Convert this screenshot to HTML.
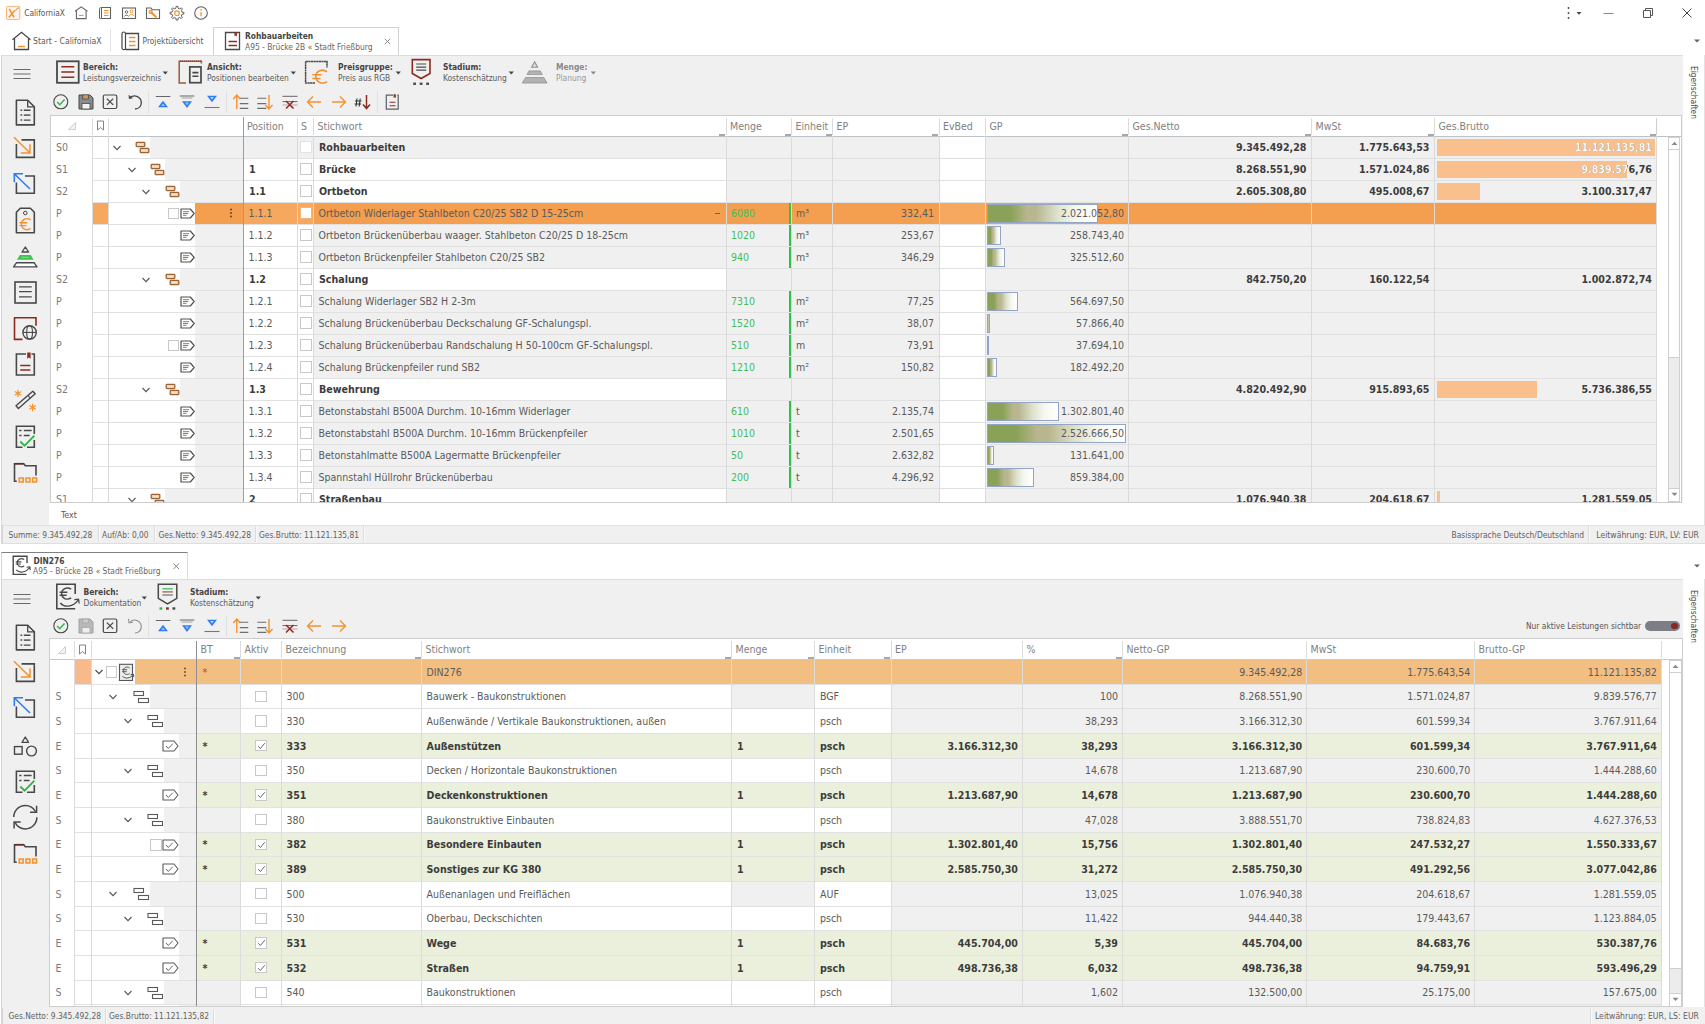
<!DOCTYPE html><html lang="de"><head><meta charset="utf-8"><title>CaliforniaX</title><style>
*{box-sizing:border-box}
html,body{margin:0;padding:0}
body{width:1705px;height:1024px;overflow:hidden;background:#fff;position:relative;font-family:"DejaVu Sans Condensed","Liberation Sans",sans-serif;font-size:8.35px;color:#555}
.a{position:absolute}
.t{position:absolute;white-space:nowrap;line-height:1}
.sm{font-size:8.35px;color:#5a5a5a}
.b{font-weight:bold}
.tb{font-weight:bold;font-size:8.4px;color:#444}
.pn{position:absolute;background:#f0f0f0}
.tbl{position:absolute;background:#fff;overflow:hidden;border:1px solid #cdcdcd}
.c{position:absolute;overflow:hidden;white-space:nowrap;font-size:10.5px;color:#5a5a5a}
.c span{position:absolute;top:50%;transform:translateY(-50%);line-height:1;margin-top:-0.4px}

.h{position:absolute;white-space:nowrap;font-size:10.5px;color:#818181;line-height:1}
.sb{font-weight:bold;font-size:10.6px;color:#3c3c3c}
.vl{position:absolute;width:1px;background:#dcdcdc}
.hl{position:absolute;height:1px;background:#e1e1e1}
.cb{position:absolute;width:11.5px;height:11.5px;border:1px solid #c8c8c8;background:#fff}
.g{color:#45be58}
</style></head><body>
<svg class="a" style="left:5px;top:5px" width="16" height="16" viewBox="0 0 16 16" fill="none"><rect x="1.500" y="1.300" width="13.300" height="13.300" rx="1" fill="#f8f5f1" stroke="#f4b47c" stroke-width="1"/><path d="M4.200 3.800l4.800 8.500M3.700 12.600L9.500 6" stroke="#f3922e" stroke-width="1.500"/><path d="M9.500 6L13.800 2.400" stroke="#f3922e" stroke-width="1.200" stroke-dasharray="1.300 0.700"/><path d="M10.500 5.200L13.800 2.400" stroke="#553" stroke-width="0.600" stroke-dasharray="0.800 1.200"/></svg>
<div class="t sm" style="left:24.2px;top:12.9px;transform:translateY(-50%);font-size:8.35px;color:#555">CaliforniaX</div>
<svg class="a" style="left:73px;top:5px" width="16" height="16" viewBox="0 0 16 16" fill="none"><path d="M2 6.300L8.200 1.900l6.300 4.400" stroke="#666" stroke-width="1.100"/><path d="M3.400 5.700V13.600h9.700V5.700" stroke="#666" stroke-width="1.100"/><path d="M5.800 10.400h4.800" stroke="#f3922e" stroke-width="1.100"/></svg>
<svg class="a" style="left:97px;top:5px" width="16" height="16" viewBox="0 0 16 16" fill="none"><path d="M4.5 2.5h9v11h-9" stroke="#606060" stroke-width="1.1"/><path d="M4.5 2.5c-1.6 0-2 .6-2 1.6V13c0 .8.8.9 2 .5z" stroke="#606060" stroke-width="1"/><path d="M7 5.5h4.5M7 8h4.5M7 10.5h4.5" stroke="#f3922e" stroke-width="1"/></svg>
<svg class="a" style="left:121px;top:5px" width="16" height="16" viewBox="0 0 16 16" fill="none"><rect x="1.5" y="3" width="13" height="10.5" stroke="#606060" stroke-width="1.1"/><circle cx="5.5" cy="7" r="1.3" stroke="#606060" stroke-width="0.9"/><path d="M3.3 11.5c.3-1.8 4-1.8 4.4 0" stroke="#606060" stroke-width="0.9"/><circle cx="10.5" cy="6.3" r="1.4" stroke="#f3922e" stroke-width="1"/><path d="M8.3 11c.3-2.2 4.2-2.2 4.5 0" stroke="#f3922e" stroke-width="1"/></svg>
<svg class="a" style="left:145px;top:5px" width="16" height="16" viewBox="0 0 16 16" fill="none"><path d="M1.500 13.500V3h4.500l1.300 1.800h7.200v8.700z" stroke="#606060" stroke-width="1.100"/><path d="M6.300 7.400l4.600 4.300" stroke="#f3922e" stroke-width="2" stroke-linecap="round"/><circle cx="5.600" cy="6.900" r="1.500" stroke="#f3922e" stroke-width="1.200"/></svg>
<svg class="a" style="left:169px;top:5px" width="16" height="16" viewBox="0 0 16 16" fill="none"><path d="M6.93 3.21 L7.14 1.35 L8.86 1.35 L9.07 3.21 L10.77 3.92 L12.23 2.75 L13.45 3.97 L12.28 5.43 L12.99 7.13 L14.85 7.34 L14.85 9.06 L12.99 9.27 L12.28 10.97 L13.45 12.43 L12.23 13.65 L10.77 12.48 L9.07 13.19 L8.86 15.05 L7.14 15.05 L6.93 13.19 L5.23 12.48 L3.77 13.65 L2.55 12.43 L3.72 10.97 L3.01 9.27 L1.15 9.06 L1.15 7.34 L3.01 7.13 L3.72 5.43 L2.55 3.97 L3.77 2.75 L5.23 3.92Z" stroke="#606060" stroke-width="1" stroke-linejoin="round"/><circle cx="8" cy="8.200" r="2.300" stroke="#f3922e" stroke-width="1.200"/></svg>
<svg class="a" style="left:193px;top:5px" width="16" height="16" viewBox="0 0 16 16" fill="none"><circle cx="8" cy="8" r="6.3" stroke="#606060" stroke-width="1.1"/><path d="M8 7v4.300" stroke="#f3922e" stroke-width="1.300"/><circle cx="8" cy="4.900" r="0.800" fill="#f3922e"/></svg>
<svg class="a" style="left:1560px;top:4px" width="30" height="18" viewBox="0 0 30 18" fill="none"><circle cx="8.500" cy="4" r="0.900" fill="#444"/><circle cx="8.500" cy="9" r="0.900" fill="#444"/><circle cx="8.500" cy="14" r="0.900" fill="#444"/><path d="M16.500 8h5l-2.500 2.800z" fill="#444"/></svg>
<svg class="a" style="left:1602px;top:4px" width="14" height="18" viewBox="0 0 14 18" fill="none"><path d="M1.5 9.5h10" stroke="#888" stroke-width="1"/></svg>
<svg class="a" style="left:1641px;top:5px" width="14" height="16" viewBox="0 0 14 16" fill="none"><path d="M2.500 5.500h7v7h-7z" stroke="#555" stroke-width="1"/><path d="M4.500 5.500v-2h7v7h-2" stroke="#555" stroke-width="1"/></svg>
<svg class="a" style="left:1680px;top:5px" width="14" height="16" viewBox="0 0 14 16" fill="none"><path d="M2.5 3.5l9 9M11.5 3.5l-9 9" stroke="#444" stroke-width="1"/></svg>
<svg class="a" style="left:11px;top:30px" width="21" height="21" viewBox="0 0 21 21" fill="none"><path d="M1.500 9.800L10.500 2.300l9 7.500" stroke="#484848" stroke-width="1.300"/><path d="M3.500 8.500V19.500h14V8.500" stroke="#484848" stroke-width="1.300"/><path d="M7 16.500h7" stroke="#f3922e" stroke-width="1.400"/></svg>
<div class="t sm" style="left:33px;top:40.9px;transform:translateY(-50%);font-size:8.6px">Start - CaliforniaX</div>
<div class="a" style="left:110px;top:29px;width:1px;height:23px;background:#e4e4e4;"></div>
<svg class="a" style="left:120px;top:30px" width="21" height="21" viewBox="0 0 21 21" fill="none"><path d="M5.500 3.500h13v16h-13" stroke="#484848" stroke-width="1.300"/><path d="M5.500 3.500c-0-2-3.500-2-3.500 0V18c0 1.800 1.500 1.800 3.500 1.500z" stroke="#484848" stroke-width="1.200"/><path d="M9 7.500h6.500M9 11.500h6.500M9 15.500h6.500" stroke="#f3922e" stroke-width="1.400"/></svg>
<div class="t sm" style="left:142.5px;top:40.9px;transform:translateY(-50%);font-size:8.35px">Projektübersicht</div>
<div class="a" style="left:213px;top:27px;width:186px;height:28px;background:#fff;border:1px solid #d2d2d2;border-bottom:none"></div>
<svg class="a" style="left:224px;top:31px" width="18" height="20" viewBox="0 0 18 20" fill="none"><path d="M1.500 1.500h14v17h-14z" stroke="#484848" stroke-width="1.300"/><path d="M10.500 1v4.500l1.200-1 1.200 1V1z" fill="#8d2b1f"/><path d="M4.500 10.500h8.500M4.500 14.500h8.500" stroke="#8d2b1f" stroke-width="1.300"/></svg>
<div class="t tb" style="left:245px;top:36px;transform:translateY(-50%);">Rohbauarbeiten</div>
<div class="t sm" style="left:245px;top:46.5px;transform:translateY(-50%);font-size:8.35px;color:#666">A95 - Brücke 2B « Stadt Frießburg</div>
<svg class="a" style="left:383px;top:37px" width="9" height="9" viewBox="0 0 9 9" fill="none"><path d="M1.800 1.800l5.400 5.400M7.200 1.800l-5.400 5.400" stroke="#808080" stroke-width="0.900"/></svg>
<svg class="a" style="left:1693px;top:38px" width="8" height="6" viewBox="0 0 8 6" fill="none"><path d="M1 1.5h6l-3 3z" fill="#666"/></svg>
<div class="pn" style="left:1px;top:54.5px;width:1704px;height:489px;border-left:1px solid #d6d6d6;border-top:1px solid #dcdcdc"></div>
<div class="a" style="left:1683px;top:55px;width:22px;height:470px;background:#fff;"></div>
<div class="t sm" style="left:1694px;top:66px;font-size:8.3px;color:#444;transform-origin:0 0;transform:rotate(90deg) translateY(-50%)">Eigenschaften</div>
<div class="a" style="left:1704px;top:55px;width:1px;height:470px;background:#e2e2e2;"></div>
<svg class="a" style="left:12px;top:68px" width="20" height="12" viewBox="0 0 20 12" fill="none"><path d="M1.5 1.5h17M1.5 6h17M1.5 10.5h17" stroke="#6a6a6a" stroke-width="1"/></svg>
<svg class="a" style="left:54px;top:58px" width="28" height="28" viewBox="54 58 28 28" fill="none"><rect x="57" y="61.300" width="21.700" height="21.500" stroke="#484848" stroke-width="1.800"/><path d="M61.300 66.800h13M61.300 72h13M61.300 77.200h13" stroke="#8d2b1f" stroke-width="1.500"/></svg>
<div class="t tb" style="left:83px;top:66.5px;transform:translateY(-50%);">Bereich:</div>
<div class="t sm" style="left:83px;top:77.5px;transform:translateY(-50%);font-size:8.35px">Leistungsverzeichnis</div>
<svg class="a" style="left:161.5px;top:70.5px" width="7" height="5" viewBox="0 0 7 5" fill="none"><path d="M0.700 0.600h5.200l-2.600 2.900z" fill="#444"/></svg>
<svg class="a" style="left:176px;top:58px" width="28" height="28" viewBox="176 58 28 28" fill="none"><path d="M186 83H179.200V61.300H201.400V63.500" stroke="#9c5b3a" stroke-width="1.500"/><path d="M180 61.100H201" stroke="#8d2b1f" stroke-width="1" stroke-dasharray="1 1"/><rect x="189.800" y="66.900" width="11.200" height="15.800" stroke="#484848" stroke-width="1.700"/><path d="M192.400 72.600h6M192.400 76.300h6" stroke="#484848" stroke-width="1.600"/></svg>
<div class="t tb" style="left:207px;top:66.5px;transform:translateY(-50%);">Ansicht:</div>
<div class="t sm" style="left:207px;top:77.5px;transform:translateY(-50%);font-size:8.35px">Positionen bearbeiten</div>
<svg class="a" style="left:289.5px;top:70.5px" width="7" height="5" viewBox="0 0 7 5" fill="none"><path d="M0.700 0.600h5.200l-2.600 2.900z" fill="#444"/></svg>
<svg class="a" style="left:302px;top:58px" width="28" height="28" viewBox="302 58 28 28" fill="none"><path d="M315 83H305.600V61.400H327V67.600" stroke="#484848" stroke-width="1.500" stroke-dasharray="2.200 0.400"/><path d="M327 71.800c-4.400-3.600-11.200-.900-11.200 4.800 0 5.800 6.700 8.500 11.200 5M312.300 74.700h9.300M312.300 78.500h8.300" stroke="#f3922e" stroke-width="1.600"/></svg>
<div class="t tb" style="left:338px;top:66.5px;transform:translateY(-50%);">Preisgruppe:</div>
<div class="t sm" style="left:338px;top:77.5px;transform:translateY(-50%);font-size:8.35px">Preis aus RGB</div>
<svg class="a" style="left:395px;top:70.5px" width="7" height="5" viewBox="0 0 7 5" fill="none"><path d="M0.700 0.600h5.200l-2.600 2.900z" fill="#444"/></svg>
<svg class="a" style="left:409px;top:56px" width="24" height="31" viewBox="409 56 24 31" fill="none"><path d="M412.300 59.600H430V73.500L421.100 78.500 412.300 73.500z" stroke="#8d2b1f" stroke-width="1.600"/><path d="M416.200 64h10M416.200 67.100h10M416.200 70.200h10" stroke="#484848" stroke-width="1.200"/><rect x="413.200" y="82.600" width="2.800" height="2.300" fill="#484848"/><rect x="419.700" y="82.600" width="2.800" height="2.300" fill="#484848"/><rect x="426.200" y="82.600" width="2.800" height="2.300" fill="#484848"/></svg>
<div class="t tb" style="left:443px;top:66.5px;transform:translateY(-50%);">Stadium:</div>
<div class="t sm" style="left:443px;top:77.5px;transform:translateY(-50%);font-size:8.35px">Kostenschätzung</div>
<svg class="a" style="left:507.5px;top:70.5px" width="7" height="5" viewBox="0 0 7 5" fill="none"><path d="M0.700 0.600h5.200l-2.600 2.900z" fill="#444"/></svg>
<svg class="a" style="left:520px;top:58px" width="30" height="28" viewBox="520 58 30 28" fill="none"><path d="M534.600 61.800L537.600 67.300H531.600z" stroke="#909090" stroke-width="1.100" fill="#dcdcdc"/><path d="M529 70.900H540.300L542.300 74.600H527z" fill="#b2b2b2" stroke="#909090" stroke-width="0.800"/><path d="M525.500 77.500H543.800L547 83H522.300z" fill="#b2b2b2" stroke="#909090" stroke-width="0.800"/></svg>
<div class="t tb" style="left:556px;top:66.5px;transform:translateY(-50%);color:#8a8a8a">Menge:</div>
<div class="t sm" style="left:556px;top:77.5px;transform:translateY(-50%);font-size:8.35px;color:#999">Planung</div>
<svg class="a" style="left:589.5px;top:70.5px" width="7" height="5" viewBox="0 0 7 5" fill="none"><path d="M0.700 0.600h5.200l-2.600 2.900z" fill="#888"/></svg>
<svg class="a" style="left:52px;top:92.7px" width="18" height="18" viewBox="0 0 18 18" fill="none"><circle cx="8.800" cy="8.800" r="7" stroke="#484848" stroke-width="1.100"/><path d="M5.200 9l2.600 2.700 4.700-5.100" stroke="#36b44b" stroke-width="1.500"/></svg>
<svg class="a" style="left:76.5px;top:92.7px" width="18" height="18" viewBox="0 0 18 18" fill="none"><path d="M2 2h11l3 3v11H2z" fill="#8a8a8a" stroke="#484848" stroke-width="1"/><rect x="5" y="10.500" width="8" height="5.500" fill="#f2f2f2" stroke="#484848" stroke-width="0.800"/><rect x="5.500" y="2" width="6" height="4" fill="#9a9a9a" stroke="#484848" stroke-width="0.700"/><rect x="7.500" y="2.300" width="2.800" height="2.800" fill="#f3922e"/></svg>
<svg class="a" style="left:101px;top:92.7px" width="18" height="18" viewBox="0 0 18 18" fill="none"><rect x="2.300" y="2" width="13.500" height="13.500" rx="1.500" stroke="#484848" stroke-width="1.200"/><path d="M5.900 5.600l6.300 6.300M12.200 5.600l-6.300 6.300" stroke="#484848" stroke-width="1.300"/></svg>
<svg class="a" style="left:125.5px;top:92.7px" width="18" height="18" viewBox="0 0 18 18" fill="none"><path d="M4 4.800c4.500-4 11.500-.800 11.300 5.200-.200 3.600-3 6-6.300 6" stroke="#484848" stroke-width="1.300"/><path d="M2.600 1.800l.300 4.200 4.100-.800z" fill="#484848"/></svg>
<div class="a" style="left:148px;top:90.7px;width:1px;height:22px;background:#e0e0e0;"></div>
<svg class="a" style="left:154px;top:92.7px" width="18" height="18" viewBox="0 0 18 18" fill="none"><path d="M1.800 3.500h14.500" stroke="#666" stroke-width="1"/><path d="M9 7.800l5 6.400H4z" fill="#2f7df6"/><path d="M9 10.600l1.900 2.400H7.100z" fill="#9cc2ff"/></svg>
<svg class="a" style="left:178px;top:92.7px" width="18" height="18" viewBox="0 0 18 18" fill="none"><path d="M1.800 3h14.500" stroke="#666" stroke-width="1"/><path d="M3.500 5h11" stroke="#9a9a9a" stroke-width="0.900"/><path d="M9 15l5-6.800H4z" fill="#2f7df6"/><path d="M9 12.200l1.900-2.600H7.100z" fill="#9cc2ff"/></svg>
<svg class="a" style="left:203px;top:92.7px" width="18" height="18" viewBox="0 0 18 18" fill="none"><path d="M9 9.300l5-6.500H4z" fill="#2f7df6"/><path d="M9 6.600l1.900-2.500H7.100z" fill="#b9d3ff"/><path d="M1.500 14.500h15" stroke="#777" stroke-width="1.100"/></svg>
<div class="a" style="left:226px;top:90.7px;width:1px;height:22px;background:#e0e0e0;"></div>
<svg class="a" style="left:231.5px;top:92.7px" width="18" height="18" viewBox="0 0 18 18" fill="none"><path d="M4.800 16V2M1.300 6l3.500-4 3.500 4" stroke="#f3922e" stroke-width="1.400"/><path d="M7.800 5.200h8.500M7.800 10.600h8.500M7.800 15.400h8.500" stroke="#6e6e6e" stroke-width="1.100"/></svg>
<svg class="a" style="left:256px;top:92.7px" width="18" height="18" viewBox="0 0 18 18" fill="none"><path d="M1.300 5.200h9M1.300 10.600h9M1.300 15.400h9" stroke="#6e6e6e" stroke-width="1.100"/><path d="M13 2v14M9.500 12l3.500 4 3.500-4" stroke="#f3922e" stroke-width="1.400"/></svg>
<svg class="a" style="left:280.5px;top:92.7px" width="18" height="18" viewBox="0 0 18 18" fill="none"><path d="M1.500 3.300h15M1.500 8.600h15" stroke="#666" stroke-width="1"/><path d="M1.500 12h15" stroke="#999" stroke-width="0.800"/><path d="M5 8l7.500 7.500M12.500 8l-7.500 7.500" stroke="#8d2b1f" stroke-width="1.500"/></svg>
<svg class="a" style="left:305px;top:92.7px" width="18" height="18" viewBox="0 0 18 18" fill="none"><path d="M16 9H2.500M8 3.500L2.500 9 8 14.500" stroke="#f3922e" stroke-width="1.400"/></svg>
<svg class="a" style="left:330px;top:92.7px" width="18" height="18" viewBox="0 0 18 18" fill="none"><path d="M2 9h13.500M10 3.500L15.500 9 10 14.500" stroke="#f3922e" stroke-width="1.400"/></svg>
<svg class="a" style="left:354px;top:92.7px" width="18" height="18" viewBox="0 0 18 18" fill="none"><path d="M3 5.500l-1 8M6.200 5.500l-1 8M1 8h6.500M.600 11h6.500" stroke="#333" stroke-width="1.100"/><path d="M12.500 2v13.500M9 11.500l3.500 4 3.500-4" stroke="#8d2b1f" stroke-width="1.500"/></svg>
<div class="a" style="left:377px;top:90.7px;width:1px;height:22px;background:#e0e0e0;"></div>
<svg class="a" style="left:383px;top:92.7px" width="18" height="18" viewBox="0 0 18 18" fill="none"><path d="M10 2.200H3.300v14h11.900v-14h-1" stroke="#5a5f6a" stroke-width="1.200"/><path d="M10.600 1.300h2.200v3.800l-1.100-.9-1.100.9z" fill="#8d2b1f"/><path d="M6.500 9.300h6M6.500 12.800h6" stroke="#8d2b1f" stroke-width="1.100"/></svg>
<svg class="a" style="left:12px;top:96px" width="28" height="33" viewBox="12 96 28 33" fill="none"><path d="M16.4 100.200H27.700L34.300 106.800V124.900H16.400z" stroke="#484848" stroke-width="1.6" stroke-linejoin="round"/><path d="M27.700 100.200V106.800H34.300" stroke="#484848" stroke-width="1.300"/><path d="M20.500 110.200h1.700M20.500 115.100h1.700M20.500 120.100h1.700" stroke="#484848" stroke-width="1.500"/><path d="M23.800 110.200h6.700M23.800 120.100h6.700" stroke="#484848" stroke-width="1.400"/><path d="M23.800 115.100h6.700" stroke="#484848" stroke-width="1.400"/></svg>
<svg class="a" style="left:10px;top:134px" width="30" height="28" viewBox="10 134 30 28" fill="none"><path d="M16.400 144V157.400H34.300V139.900H21.500" stroke="#484848" stroke-width="1.6"/><path d="M14 137.200L29.800 152.800M30 144.200V153H20.800" stroke="#f3922e" stroke-width="1.500"/></svg>
<svg class="a" style="left:10px;top:170px" width="30" height="28" viewBox="10 170 30 28" fill="none"><path d="M16.400 182.500V193.300H34.300V176H25" stroke="#484848" stroke-width="1.6"/><path d="M30 189L14.500 174M14.300 182.300V173.800H23" stroke="#2f7df6" stroke-width="1.600"/></svg>
<svg class="a" style="left:10px;top:204px" width="30" height="33" viewBox="10 204 30 33" fill="none"><path d="M16.400 232.800V212.300L20.300 208.300H30.400L34.300 212.300V232.800z" stroke="#484848" stroke-width="1.6" stroke-linejoin="round"/><circle cx="25.300" cy="213" r="1.800" stroke="#484848" stroke-width="1"/><path d="M30.800 219.800c-4.300-2.800-9.300-.2-9.300 4.400s5 7.100 9.300 4.300M19.400 222.800h7.800M19.400 225.600h7" stroke="#f3922e" stroke-width="1.400"/></svg>
<svg class="a" style="left:10px;top:242px" width="30" height="28" viewBox="10 242 30 28" fill="none"><path d="M25.300 247L28.600 252H22z" stroke="#484848" stroke-width="1.300" stroke-linejoin="round"/><path d="M19.800 254.900H30.800L33.600 259.700H17z" fill="#3fc450"/><path d="M21.500 257.300h7.600" stroke="#8fe09a" stroke-width="0.900"/><path d="M16.400 262.800H34.200L37 266.900H13.600z" fill="#fff" stroke="#484848" stroke-width="1.400" stroke-linejoin="round"/></svg>
<svg class="a" style="left:10px;top:278px" width="30" height="29" viewBox="10 278 30 29" fill="none"><rect x="15" y="282" width="21" height="21" stroke="#484848" stroke-width="1.6"/><path d="M19 286.800h12.700M19 291.600h12.700M19 296.800h12.700" stroke="#484848" stroke-width="1.300"/></svg>
<svg class="a" style="left:10px;top:314px" width="30" height="30" viewBox="10 314 30 30" fill="none"><path d="M22.500 339.400H14.500V317.800H36V325.800" stroke="#8d2b1f" stroke-width="1.6"/><circle cx="29.600" cy="332.400" r="6.700" stroke="#484848" stroke-width="1.400"/><ellipse cx="29.600" cy="332.400" rx="2.900" ry="6.700" stroke="#484848" stroke-width="1.100"/><path d="M23 332.400h13.200" stroke="#484848" stroke-width="1.100"/></svg>
<svg class="a" style="left:10px;top:350px" width="30" height="29" viewBox="10 350 30 29" fill="none"><path d="M26 354H16.400V375H34.300V354H31.500" stroke="#484848" stroke-width="1.6"/><path d="M27.200 352.500h3.400v6.300l-1.700-1.300-1.700 1.300z" fill="#8d2b1f"/><path d="M20.200 365.500h10.200M20.200 370h10.200" stroke="#8d2b1f" stroke-width="1.400"/></svg>
<svg class="a" style="left:10px;top:387px" width="30" height="29" viewBox="10 387 30 29" fill="none"><path d="M16 405.800L32.800 391.200L35.200 393.800L18.400 408.500z" stroke="#484848" stroke-width="1.400" stroke-linejoin="round"/><path d="M28 395.500l2.300 2.600" stroke="#484848" stroke-width="1.100"/><path d="M18 389.800v7.400M14.800 391.600l6.400 3.700M21.200 391.600l-6.400 3.700" stroke="#f3922e" stroke-width="1.200"/><path d="M32.600 403.800v7.400M29.400 405.600l6.400 3.700M35.800 405.600l-6.400 3.700" stroke="#f3922e" stroke-width="1.200"/></svg>
<svg class="a" style="left:10px;top:422px" width="30" height="30" viewBox="10 422 30 30" fill="none"><path d="M22.500 447.300H16.400V426.200H34.300V434M34.300 440V447.300H27" stroke="#484848" stroke-width="1.6"/><path d="M19.200 430.600h2.300M19.200 435.600h2.300M23.800 430.600h7.800M23.800 435.600h5.800" stroke="#484848" stroke-width="1.500"/><path d="M20.300 441.500l4.300 4.100 9.800-10" stroke="#36b44b" stroke-width="1.900"/></svg>
<svg class="a" style="left:10px;top:459px" width="30" height="27" viewBox="10 459 30 27" fill="none"><path d="M16.800 481.300H14.500V463.700H23.800L25.300 465.800H36V475.500" stroke="#484848" stroke-width="1.6"/><path d="M14.500 463.700H23.800" stroke="#6b2a24" stroke-width="1.6"/><rect x="19.200" y="478" width="4" height="4" fill="#fde3c8" stroke="#f3922e" stroke-width="1.500"/><rect x="25.900" y="478" width="4" height="4" fill="#fde3c8" stroke="#f3922e" stroke-width="1.500"/><rect x="32.600" y="478" width="4" height="4" fill="#fde3c8" stroke="#f3922e" stroke-width="1.500"/></svg>
<div class="tbl" style="left:50px;top:115.3px;width:1632px;height:387.5px">
<div class="a" style="left:0;top:0;width:1640px;height:20.6px;background:#fff;border-bottom:1px solid #bcc2c5"></div>
<div class="h" style="left:196px;top:10.0px;transform:translateY(-50%)">Position</div>
<div class="h" style="left:250px;top:10.0px;transform:translateY(-50%)">S</div>
<div class="h" style="left:266.5px;top:10.0px;transform:translateY(-50%)">Stichwort</div>
<div class="h" style="left:679px;top:10.0px;transform:translateY(-50%)">Menge</div>
<div class="h" style="left:744.5px;top:10.0px;transform:translateY(-50%)">Einheit</div>
<div class="h" style="left:785.5px;top:10.0px;transform:translateY(-50%)">EP</div>
<div class="h" style="left:892px;top:10.0px;transform:translateY(-50%)">EvBed</div>
<div class="h" style="left:938.5px;top:10.0px;transform:translateY(-50%)">GP</div>
<div class="h" style="left:1081.5px;top:10.0px;transform:translateY(-50%)">Ges.Netto</div>
<div class="h" style="left:1264.5px;top:10.0px;transform:translateY(-50%)">MwSt</div>
<div class="h" style="left:1387.5px;top:10.0px;transform:translateY(-50%)">Ges.Brutto</div>
<div class="vl" style="left:40.5px;top:1.7px;height:17px;background:#dcdcdc"></div>
<div class="vl" style="left:57.0px;top:1.7px;height:17px;background:#dcdcdc"></div>
<div class="vl" style="left:245.5px;top:1.7px;height:17px;background:#dcdcdc"></div>
<div class="vl" style="left:262.0px;top:1.7px;height:17px;background:#dcdcdc"></div>
<div class="vl" style="left:674.5px;top:1.7px;height:17px;background:#dcdcdc"></div>
<div class="vl" style="left:740.0px;top:1.7px;height:17px;background:#dcdcdc"></div>
<div class="vl" style="left:781.0px;top:1.7px;height:17px;background:#dcdcdc"></div>
<div class="vl" style="left:887.5px;top:1.7px;height:17px;background:#dcdcdc"></div>
<div class="vl" style="left:934.0px;top:1.7px;height:17px;background:#dcdcdc"></div>
<div class="vl" style="left:1077.0px;top:1.7px;height:17px;background:#dcdcdc"></div>
<div class="vl" style="left:1260.0px;top:1.7px;height:17px;background:#dcdcdc"></div>
<div class="vl" style="left:1383.0px;top:1.7px;height:17px;background:#dcdcdc"></div>
<div class="vl" style="left:1605.0px;top:1.7px;height:17px;background:#cfcfcf"></div>
<div class="a" style="left:668px;top:17.7px;width:6px;height:2px;background:#a8a8a8"></div>
<div class="a" style="left:733.5px;top:17.7px;width:6px;height:2px;background:#a8a8a8"></div>
<div class="a" style="left:774.5px;top:17.7px;width:6px;height:2px;background:#a8a8a8"></div>
<div class="a" style="left:881px;top:17.7px;width:6px;height:2px;background:#a8a8a8"></div>
<div class="a" style="left:1070.5px;top:17.7px;width:6px;height:2px;background:#a8a8a8"></div>
<div class="a" style="left:1253.5px;top:17.7px;width:6px;height:2px;background:#a8a8a8"></div>
<div class="a" style="left:1376.5px;top:17.7px;width:6px;height:2px;background:#a8a8a8"></div>
<div class="a" style="left:1598.5px;top:17.7px;width:6px;height:2px;background:#a8a8a8"></div>
<svg class="a" style="left:15.5px;top:4.7px" width="10" height="10" viewBox="0 0 10 10" fill="none"><path d="M8.5 1.5v7h-7z" fill="#f3f3f3" stroke="#cfcfcf" stroke-width="1"/></svg>
<svg class="a" style="left:45px;top:4.2px" width="9" height="11" viewBox="0 0 9 11" fill="none"><path d="M1.5 1h6v9l-3-2.4-3 2.4z" stroke="#777" stroke-width="0.9"/></svg>
<div class="c " style="left:-1px;top:20.0px;width:42px;height:22.0px;background:#fff;color:#7a7a7a"><span style="left:6px">S0</span></div>
<div class="c" style="left:41px;top:20.0px;width:16.5px;height:22.0px;background:#fff;"></div>
<div class="c" style="left:57.5px;top:20.0px;width:41.5px;height:22.0px;background:#fff;"></div>
<div class="c" style="left:99px;top:20.0px;width:93px;height:22.0px;background:#f0f0f0;"></div>
<svg class="a" style="left:60.7px;top:27.8px" width="10" height="8" viewBox="0 0 10 8" fill="none"><path d="M1.5 2l3.5 3.6L8.5 2" stroke="#555" stroke-width="1.1"/></svg>
<svg class="a" style="left:84px;top:24.5px" width="15" height="13" viewBox="0 0 15 13" fill="none"><rect x="1.200" y="1.300" width="8.600" height="4.300" rx="0.800" fill="#ecd0b0" stroke="#9c6538" stroke-width="1.300"/><rect x="5.200" y="7.400" width="8.600" height="4.300" rx="0.800" fill="#ecd0b0" stroke="#9c6538" stroke-width="1.300"/><path d="M3.200 3.450h4.600M7.200 9.550h4.600" stroke="#f7e6d2" stroke-width="0.900"/></svg>
<div class="c" style="left:192px;top:20.0px;width:54px;height:22.0px;background:#f0f0f0;"></div>
<div class="c" style="left:246px;top:20.0px;width:16.5px;height:22.0px;background:#f0f0f0;"></div>
<div class="cb" style="left:249.3px;top:25.1px;border-color:#e3e3e3;"></div>
<div class="c sb" style="left:262.5px;top:20.0px;width:412.5px;height:22.0px;background:#f0f0f0;"><span style="left:5.5px">Rohbauarbeiten</span></div>
<div class="c" style="left:675px;top:20.0px;width:65.5px;height:22.0px;background:#f0f0f0;"></div>
<div class="c" style="left:740.5px;top:20.0px;width:41.0px;height:22.0px;background:#f0f0f0;"></div>
<div class="c" style="left:781.5px;top:20.0px;width:106.5px;height:22.0px;background:#f0f0f0;"></div>
<div class="c" style="left:888px;top:20.0px;width:46.5px;height:22.0px;background:#fff;"></div>
<div class="c" style="left:934.5px;top:20.0px;width:143.0px;height:22.0px;background:#f0f0f0;"></div>
<div class="c sb nb" style="left:1077.5px;top:20.0px;width:183.0px;height:22.0px;background:#f0f0f0;"><span style="right:5px">9.345.492,28</span></div>
<div class="c sb nb" style="left:1260.5px;top:20.0px;width:123.0px;height:22.0px;background:#f0f0f0;"><span style="right:5px">1.775.643,53</span></div>
<div class="c" style="left:1383.5px;top:20.0px;width:222.0px;height:22.0px;background:#f0f0f0;"></div>
<div class="a" style="left:1386px;top:22.5px;width:217.5px;height:17px;background:#f9bf8c"></div>
<div class="c sb nb" style="left:1383.5px;top:20.0px;width:222px;height:22.0px;background:transparent"><span style="right:4.5px">11.121.135,81</span></div>
<div class="c sb nb" style="left:1386px;top:20.0px;width:217.5px;height:22.0px;background:transparent;color:#fff"><span style="left:215.0px;transform:translate(-100%,-50%)">11.121.135,81</span></div>
<div class="c " style="left:-1px;top:42.0px;width:42px;height:22.0px;background:#fff;color:#7a7a7a"><span style="left:6px">S1</span></div>
<div class="c" style="left:41px;top:42.0px;width:16.5px;height:22.0px;background:#fff;"></div>
<div class="c" style="left:57.5px;top:42.0px;width:56.5px;height:22.0px;background:#fff;"></div>
<div class="c" style="left:114px;top:42.0px;width:78px;height:22.0px;background:#f0f0f0;"></div>
<svg class="a" style="left:75.7px;top:49.8px" width="10" height="8" viewBox="0 0 10 8" fill="none"><path d="M1.5 2l3.5 3.6L8.5 2" stroke="#555" stroke-width="1.1"/></svg>
<svg class="a" style="left:99px;top:46.5px" width="15" height="13" viewBox="0 0 15 13" fill="none"><rect x="1.200" y="1.300" width="8.600" height="4.300" rx="0.800" fill="#ecd0b0" stroke="#9c6538" stroke-width="1.300"/><rect x="5.200" y="7.400" width="8.600" height="4.300" rx="0.800" fill="#ecd0b0" stroke="#9c6538" stroke-width="1.300"/><path d="M3.200 3.450h4.600M7.200 9.550h4.600" stroke="#f7e6d2" stroke-width="0.900"/></svg>
<div class="c sb" style="left:192px;top:42.0px;width:54px;height:22.0px;background:#fff;"><span style="left:6px">1</span></div>
<div class="c" style="left:246px;top:42.0px;width:16.5px;height:22.0px;background:#fff;"></div>
<div class="cb" style="left:249.3px;top:47.1px;"></div>
<div class="c sb" style="left:262.5px;top:42.0px;width:412.5px;height:22.0px;background:#fff;"><span style="left:5.5px">Brücke</span></div>
<div class="c" style="left:675px;top:42.0px;width:65.5px;height:22.0px;background:#f0f0f0;"></div>
<div class="c" style="left:740.5px;top:42.0px;width:41.0px;height:22.0px;background:#f0f0f0;"></div>
<div class="c" style="left:781.5px;top:42.0px;width:106.5px;height:22.0px;background:#f0f0f0;"></div>
<div class="c" style="left:888px;top:42.0px;width:46.5px;height:22.0px;background:#fff;"></div>
<div class="c" style="left:934.5px;top:42.0px;width:143.0px;height:22.0px;background:#f0f0f0;"></div>
<div class="c sb nb" style="left:1077.5px;top:42.0px;width:183.0px;height:22.0px;background:#f0f0f0;"><span style="right:5px">8.268.551,90</span></div>
<div class="c sb nb" style="left:1260.5px;top:42.0px;width:123.0px;height:22.0px;background:#f0f0f0;"><span style="right:5px">1.571.024,86</span></div>
<div class="c" style="left:1383.5px;top:42.0px;width:222.0px;height:22.0px;background:#f0f0f0;"></div>
<div class="a" style="left:1386px;top:44.5px;width:189.6px;height:17px;background:#f9bf8c"></div>
<div class="c sb nb" style="left:1383.5px;top:42.0px;width:222px;height:22.0px;background:transparent"><span style="right:4.5px">9.839.576,76</span></div>
<div class="c sb nb" style="left:1386px;top:42.0px;width:189.6px;height:22.0px;background:transparent;color:#fff"><span style="left:215.0px;transform:translate(-100%,-50%)">9.839.576,76</span></div>
<div class="c " style="left:-1px;top:64.0px;width:42px;height:22.0px;background:#fff;color:#7a7a7a"><span style="left:6px">S2</span></div>
<div class="c" style="left:41px;top:64.0px;width:16.5px;height:22.0px;background:#fff;"></div>
<div class="c" style="left:57.5px;top:64.0px;width:71.0px;height:22.0px;background:#fff;"></div>
<div class="c" style="left:128.5px;top:64.0px;width:63.5px;height:22.0px;background:#f0f0f0;"></div>
<svg class="a" style="left:89.7px;top:71.8px" width="10" height="8" viewBox="0 0 10 8" fill="none"><path d="M1.5 2l3.5 3.6L8.5 2" stroke="#555" stroke-width="1.1"/></svg>
<svg class="a" style="left:113.5px;top:68.5px" width="15" height="13" viewBox="0 0 15 13" fill="none"><rect x="1.200" y="1.300" width="8.600" height="4.300" rx="0.800" fill="#ecd0b0" stroke="#9c6538" stroke-width="1.300"/><rect x="5.200" y="7.400" width="8.600" height="4.300" rx="0.800" fill="#ecd0b0" stroke="#9c6538" stroke-width="1.300"/><path d="M3.200 3.450h4.600M7.200 9.550h4.600" stroke="#f7e6d2" stroke-width="0.900"/></svg>
<div class="c sb" style="left:192px;top:64.0px;width:54px;height:22.0px;background:#fff;"><span style="left:6px">1.1</span></div>
<div class="c" style="left:246px;top:64.0px;width:16.5px;height:22.0px;background:#fff;"></div>
<div class="cb" style="left:249.3px;top:69.1px;"></div>
<div class="c sb" style="left:262.5px;top:64.0px;width:412.5px;height:22.0px;background:#fff;"><span style="left:5.5px">Ortbeton</span></div>
<div class="c" style="left:675px;top:64.0px;width:65.5px;height:22.0px;background:#f0f0f0;"></div>
<div class="c" style="left:740.5px;top:64.0px;width:41.0px;height:22.0px;background:#f0f0f0;"></div>
<div class="c" style="left:781.5px;top:64.0px;width:106.5px;height:22.0px;background:#f0f0f0;"></div>
<div class="c" style="left:888px;top:64.0px;width:46.5px;height:22.0px;background:#fff;"></div>
<div class="c" style="left:934.5px;top:64.0px;width:143.0px;height:22.0px;background:#f0f0f0;"></div>
<div class="c sb nb" style="left:1077.5px;top:64.0px;width:183.0px;height:22.0px;background:#f0f0f0;"><span style="right:5px">2.605.308,80</span></div>
<div class="c sb nb" style="left:1260.5px;top:64.0px;width:123.0px;height:22.0px;background:#f0f0f0;"><span style="right:5px">495.008,67</span></div>
<div class="c" style="left:1383.5px;top:64.0px;width:222.0px;height:22.0px;background:#f0f0f0;"></div>
<div class="a" style="left:1386px;top:66.5px;width:42.9px;height:17px;background:#f9bf8c"></div>
<div class="c sb nb" style="left:1383.5px;top:64.0px;width:222px;height:22.0px;background:transparent"><span style="right:4.5px">3.100.317,47</span></div>
<div class="c sb nb" style="left:1386px;top:64.0px;width:42.9px;height:22.0px;background:transparent;color:#fff"><span style="left:215.0px;transform:translate(-100%,-50%)">3.100.317,47</span></div>
<div class="c " style="left:-1px;top:86.0px;width:42px;height:22.0px;background:#fff;color:#7a7a7a"><span style="left:6px">P</span></div>
<div class="c" style="left:41px;top:86.0px;width:16.5px;height:22.0px;background:#f7a85f;"></div>
<div class="c" style="left:57.5px;top:86.0px;width:86.0px;height:22.0px;background:#fff;"></div>
<div class="c" style="left:143.5px;top:86.0px;width:48.5px;height:22.0px;background:#f49e4f;"></div>
<div class="cb" style="left:116.5px;top:91.5px"></div>
<svg class="a" style="left:128.5px;top:91.5px" width="15" height="11" viewBox="0 0 15 11" fill="none"><path d="M1 1h9.300l3.900 4.500-3.900 4.500H1z" fill="#fff" stroke="#505050" stroke-width="1.200" stroke-linejoin="round"/><path d="M3 3.700h6.200M3 5.500h5.200M3 7.300h3.600" stroke="#9c6538" stroke-width="0.900"/></svg>
<svg class="a" style="left:178px;top:92.0px" width="4" height="10" viewBox="0 0 4 10"><circle cx="2" cy="1.5" r="0.9" fill="#5a3a1a"/><circle cx="2" cy="5" r="0.9" fill="#5a3a1a"/><circle cx="2" cy="8.5" r="0.9" fill="#5a3a1a"/></svg>
<div class="c " style="left:192px;top:86.0px;width:54px;height:22.0px;background:#f7a85f;"><span style="left:5.5px">1.1.1</span></div>
<div class="c" style="left:246px;top:86.0px;width:16.5px;height:22.0px;background:#f7a85f;"></div>
<div class="cb" style="left:249.3px;top:91.1px;border-color:#f7b277;"></div>
<div class="c " style="left:262.5px;top:86.0px;width:412.5px;height:22.0px;background:#f49e4f;"><span style="left:5px">Ortbeton Widerlager Stahlbeton C20/25 SB2 D 15-25cm</span></div>
<div class="a" style="left:664px;top:97.0px;width:5px;height:1px;background:#8a5a2a"></div>
<div class="c g n" style="left:675px;top:86.0px;width:65.5px;height:22.0px;background:#f49e4f;"><span style="left:5px">6080</span></div>
<div class="c " style="left:740.5px;top:86.0px;width:41.0px;height:22.0px;background:#f49e4f;"><span style="left:4.6px">m³</span></div>
<div class="a" style="left:738.3px;top:86.0px;width:1.7px;height:22.0px;background:#2fc24e"></div>
<div class="c n" style="left:781.5px;top:86.0px;width:106.5px;height:22.0px;background:#f49e4f;"><span style="right:5px">332,41</span></div>
<div class="c" style="left:888px;top:86.0px;width:46.5px;height:22.0px;background:#f7a85f;"></div>
<div class="c" style="left:934.5px;top:86.0px;width:143.0px;height:22.0px;background:#f49e4f;"></div>
<div class="a" style="left:936.2px;top:87.7px;width:110.8px;height:18.6px;border:1px solid #93a5c6;background:linear-gradient(90deg,#8aa258 0%,#8aa258 21%,#b9b68f 36%,#b9b68f 44%,#dfe3cd 64%,#f6f7f0 80%,#fff 100%)"></div>
<div class="c n" style="left:934.5px;top:86.0px;width:143px;height:22.0px;background:transparent"><span style="right:4.5px">2.021.052,80</span></div>
<div class="c" style="left:1077.5px;top:86.0px;width:183.0px;height:22.0px;background:#f49e4f;"></div>
<div class="c" style="left:1260.5px;top:86.0px;width:123.0px;height:22.0px;background:#f49e4f;"></div>
<div class="c" style="left:1383.5px;top:86.0px;width:222.0px;height:22.0px;background:#f49e4f;"></div>
<div class="c " style="left:-1px;top:108.0px;width:42px;height:22.0px;background:#fff;color:#7a7a7a"><span style="left:6px">P</span></div>
<div class="c" style="left:41px;top:108.0px;width:16.5px;height:22.0px;background:#fff;"></div>
<div class="c" style="left:57.5px;top:108.0px;width:86.0px;height:22.0px;background:#fff;"></div>
<div class="c" style="left:143.5px;top:108.0px;width:48.5px;height:22.0px;background:#f0f0f0;"></div>
<svg class="a" style="left:128.5px;top:113.5px" width="15" height="11" viewBox="0 0 15 11" fill="none"><path d="M1 1h9.300l3.900 4.500-3.900 4.500H1z" fill="#fff" stroke="#505050" stroke-width="1.200" stroke-linejoin="round"/><path d="M3 3.700h6.200M3 5.500h5.200M3 7.300h3.600" stroke="#9c6538" stroke-width="0.900"/></svg>
<div class="c " style="left:192px;top:108.0px;width:54px;height:22.0px;background:#fff;"><span style="left:5.5px">1.1.2</span></div>
<div class="c" style="left:246px;top:108.0px;width:16.5px;height:22.0px;background:#fff;"></div>
<div class="cb" style="left:249.3px;top:113.1px;"></div>
<div class="c " style="left:262.5px;top:108.0px;width:412.5px;height:22.0px;background:#f0f0f0;"><span style="left:5px">Ortbeton Brückenüberbau waager. Stahlbeton C20/25 D 18-25cm</span></div>
<div class="c g n" style="left:675px;top:108.0px;width:65.5px;height:22.0px;background:#f0f0f0;"><span style="left:5px">1020</span></div>
<div class="c " style="left:740.5px;top:108.0px;width:41.0px;height:22.0px;background:#f0f0f0;"><span style="left:4.6px">m³</span></div>
<div class="a" style="left:738.3px;top:108.0px;width:1.7px;height:22.0px;background:#2fc24e"></div>
<div class="c n" style="left:781.5px;top:108.0px;width:106.5px;height:22.0px;background:#f0f0f0;"><span style="right:5px">253,67</span></div>
<div class="c" style="left:888px;top:108.0px;width:46.5px;height:22.0px;background:#fff;"></div>
<div class="c" style="left:934.5px;top:108.0px;width:143.0px;height:22.0px;background:#f0f0f0;"></div>
<div class="a" style="left:936.2px;top:109.7px;width:14.2px;height:18.6px;border:1px solid #93a5c6;background:linear-gradient(90deg,#8aa258 0%,#8aa258 21%,#b9b68f 36%,#b9b68f 44%,#dfe3cd 64%,#f6f7f0 80%,#fff 100%)"></div>
<div class="c n" style="left:934.5px;top:108.0px;width:143px;height:22.0px;background:transparent"><span style="right:4.5px">258.743,40</span></div>
<div class="c" style="left:1077.5px;top:108.0px;width:183.0px;height:22.0px;background:#f0f0f0;"></div>
<div class="c" style="left:1260.5px;top:108.0px;width:123.0px;height:22.0px;background:#f0f0f0;"></div>
<div class="c" style="left:1383.5px;top:108.0px;width:222.0px;height:22.0px;background:#f0f0f0;"></div>
<div class="c " style="left:-1px;top:130.0px;width:42px;height:22.0px;background:#fff;color:#7a7a7a"><span style="left:6px">P</span></div>
<div class="c" style="left:41px;top:130.0px;width:16.5px;height:22.0px;background:#fff;"></div>
<div class="c" style="left:57.5px;top:130.0px;width:86.0px;height:22.0px;background:#fff;"></div>
<div class="c" style="left:143.5px;top:130.0px;width:48.5px;height:22.0px;background:#f0f0f0;"></div>
<svg class="a" style="left:128.5px;top:135.5px" width="15" height="11" viewBox="0 0 15 11" fill="none"><path d="M1 1h9.300l3.900 4.500-3.900 4.500H1z" fill="#fff" stroke="#505050" stroke-width="1.200" stroke-linejoin="round"/><path d="M3 3.700h6.200M3 5.500h5.200M3 7.300h3.600" stroke="#9c6538" stroke-width="0.900"/></svg>
<div class="c " style="left:192px;top:130.0px;width:54px;height:22.0px;background:#fff;"><span style="left:5.5px">1.1.3</span></div>
<div class="c" style="left:246px;top:130.0px;width:16.5px;height:22.0px;background:#fff;"></div>
<div class="cb" style="left:249.3px;top:135.1px;"></div>
<div class="c " style="left:262.5px;top:130.0px;width:412.5px;height:22.0px;background:#f0f0f0;"><span style="left:5px">Ortbeton Brückenpfeiler Stahlbeton C20/25 SB2</span></div>
<div class="c g n" style="left:675px;top:130.0px;width:65.5px;height:22.0px;background:#f0f0f0;"><span style="left:5px">940</span></div>
<div class="c " style="left:740.5px;top:130.0px;width:41.0px;height:22.0px;background:#f0f0f0;"><span style="left:4.6px">m³</span></div>
<div class="a" style="left:738.3px;top:130.0px;width:1.7px;height:22.0px;background:#2fc24e"></div>
<div class="c n" style="left:781.5px;top:130.0px;width:106.5px;height:22.0px;background:#f0f0f0;"><span style="right:5px">346,29</span></div>
<div class="c" style="left:888px;top:130.0px;width:46.5px;height:22.0px;background:#fff;"></div>
<div class="c" style="left:934.5px;top:130.0px;width:143.0px;height:22.0px;background:#f0f0f0;"></div>
<div class="a" style="left:936.2px;top:131.7px;width:17.8px;height:18.6px;border:1px solid #93a5c6;background:linear-gradient(90deg,#8aa258 0%,#8aa258 21%,#b9b68f 36%,#b9b68f 44%,#dfe3cd 64%,#f6f7f0 80%,#fff 100%)"></div>
<div class="c n" style="left:934.5px;top:130.0px;width:143px;height:22.0px;background:transparent"><span style="right:4.5px">325.512,60</span></div>
<div class="c" style="left:1077.5px;top:130.0px;width:183.0px;height:22.0px;background:#f0f0f0;"></div>
<div class="c" style="left:1260.5px;top:130.0px;width:123.0px;height:22.0px;background:#f0f0f0;"></div>
<div class="c" style="left:1383.5px;top:130.0px;width:222.0px;height:22.0px;background:#f0f0f0;"></div>
<div class="c " style="left:-1px;top:152.0px;width:42px;height:22.0px;background:#fff;color:#7a7a7a"><span style="left:6px">S2</span></div>
<div class="c" style="left:41px;top:152.0px;width:16.5px;height:22.0px;background:#fff;"></div>
<div class="c" style="left:57.5px;top:152.0px;width:71.0px;height:22.0px;background:#fff;"></div>
<div class="c" style="left:128.5px;top:152.0px;width:63.5px;height:22.0px;background:#f0f0f0;"></div>
<svg class="a" style="left:89.7px;top:159.8px" width="10" height="8" viewBox="0 0 10 8" fill="none"><path d="M1.5 2l3.5 3.6L8.5 2" stroke="#555" stroke-width="1.1"/></svg>
<svg class="a" style="left:113.5px;top:156.5px" width="15" height="13" viewBox="0 0 15 13" fill="none"><rect x="1.200" y="1.300" width="8.600" height="4.300" rx="0.800" fill="#ecd0b0" stroke="#9c6538" stroke-width="1.300"/><rect x="5.200" y="7.400" width="8.600" height="4.300" rx="0.800" fill="#ecd0b0" stroke="#9c6538" stroke-width="1.300"/><path d="M3.200 3.450h4.600M7.200 9.550h4.600" stroke="#f7e6d2" stroke-width="0.900"/></svg>
<div class="c sb" style="left:192px;top:152.0px;width:54px;height:22.0px;background:#fff;"><span style="left:6px">1.2</span></div>
<div class="c" style="left:246px;top:152.0px;width:16.5px;height:22.0px;background:#fff;"></div>
<div class="cb" style="left:249.3px;top:157.1px;"></div>
<div class="c sb" style="left:262.5px;top:152.0px;width:412.5px;height:22.0px;background:#fff;"><span style="left:5.5px">Schalung</span></div>
<div class="c" style="left:675px;top:152.0px;width:65.5px;height:22.0px;background:#f0f0f0;"></div>
<div class="c" style="left:740.5px;top:152.0px;width:41.0px;height:22.0px;background:#f0f0f0;"></div>
<div class="c" style="left:781.5px;top:152.0px;width:106.5px;height:22.0px;background:#f0f0f0;"></div>
<div class="c" style="left:888px;top:152.0px;width:46.5px;height:22.0px;background:#fff;"></div>
<div class="c" style="left:934.5px;top:152.0px;width:143.0px;height:22.0px;background:#f0f0f0;"></div>
<div class="c sb nb" style="left:1077.5px;top:152.0px;width:183.0px;height:22.0px;background:#f0f0f0;"><span style="right:5px">842.750,20</span></div>
<div class="c sb nb" style="left:1260.5px;top:152.0px;width:123.0px;height:22.0px;background:#f0f0f0;"><span style="right:5px">160.122,54</span></div>
<div class="c" style="left:1383.5px;top:152.0px;width:222.0px;height:22.0px;background:#f0f0f0;"></div>
<div class="c sb nb" style="left:1383.5px;top:152.0px;width:222px;height:22.0px;background:transparent"><span style="right:4.5px">1.002.872,74</span></div>
<div class="c " style="left:-1px;top:174.0px;width:42px;height:22.0px;background:#fff;color:#7a7a7a"><span style="left:6px">P</span></div>
<div class="c" style="left:41px;top:174.0px;width:16.5px;height:22.0px;background:#fff;"></div>
<div class="c" style="left:57.5px;top:174.0px;width:86.0px;height:22.0px;background:#fff;"></div>
<div class="c" style="left:143.5px;top:174.0px;width:48.5px;height:22.0px;background:#f0f0f0;"></div>
<svg class="a" style="left:128.5px;top:179.5px" width="15" height="11" viewBox="0 0 15 11" fill="none"><path d="M1 1h9.300l3.900 4.500-3.900 4.500H1z" fill="#fff" stroke="#505050" stroke-width="1.200" stroke-linejoin="round"/><path d="M3 3.700h6.200M3 5.500h5.200M3 7.300h3.600" stroke="#9c6538" stroke-width="0.900"/></svg>
<div class="c " style="left:192px;top:174.0px;width:54px;height:22.0px;background:#fff;"><span style="left:5.5px">1.2.1</span></div>
<div class="c" style="left:246px;top:174.0px;width:16.5px;height:22.0px;background:#fff;"></div>
<div class="cb" style="left:249.3px;top:179.1px;"></div>
<div class="c " style="left:262.5px;top:174.0px;width:412.5px;height:22.0px;background:#f0f0f0;"><span style="left:5px">Schalung Widerlager SB2 H 2-3m</span></div>
<div class="c g n" style="left:675px;top:174.0px;width:65.5px;height:22.0px;background:#f0f0f0;"><span style="left:5px">7310</span></div>
<div class="c " style="left:740.5px;top:174.0px;width:41.0px;height:22.0px;background:#f0f0f0;"><span style="left:4.6px">m²</span></div>
<div class="a" style="left:738.3px;top:174.0px;width:1.7px;height:22.0px;background:#2fc24e"></div>
<div class="c n" style="left:781.5px;top:174.0px;width:106.5px;height:22.0px;background:#f0f0f0;"><span style="right:5px">77,25</span></div>
<div class="c" style="left:888px;top:174.0px;width:46.5px;height:22.0px;background:#fff;"></div>
<div class="c" style="left:934.5px;top:174.0px;width:143.0px;height:22.0px;background:#f0f0f0;"></div>
<div class="a" style="left:936.2px;top:175.7px;width:31.0px;height:18.6px;border:1px solid #93a5c6;background:linear-gradient(90deg,#8aa258 0%,#8aa258 21%,#b9b68f 36%,#b9b68f 44%,#dfe3cd 64%,#f6f7f0 80%,#fff 100%)"></div>
<div class="c n" style="left:934.5px;top:174.0px;width:143px;height:22.0px;background:transparent"><span style="right:4.5px">564.697,50</span></div>
<div class="c" style="left:1077.5px;top:174.0px;width:183.0px;height:22.0px;background:#f0f0f0;"></div>
<div class="c" style="left:1260.5px;top:174.0px;width:123.0px;height:22.0px;background:#f0f0f0;"></div>
<div class="c" style="left:1383.5px;top:174.0px;width:222.0px;height:22.0px;background:#f0f0f0;"></div>
<div class="c " style="left:-1px;top:196.0px;width:42px;height:22.0px;background:#fff;color:#7a7a7a"><span style="left:6px">P</span></div>
<div class="c" style="left:41px;top:196.0px;width:16.5px;height:22.0px;background:#fff;"></div>
<div class="c" style="left:57.5px;top:196.0px;width:86.0px;height:22.0px;background:#fff;"></div>
<div class="c" style="left:143.5px;top:196.0px;width:48.5px;height:22.0px;background:#f0f0f0;"></div>
<svg class="a" style="left:128.5px;top:201.5px" width="15" height="11" viewBox="0 0 15 11" fill="none"><path d="M1 1h9.300l3.900 4.500-3.900 4.500H1z" fill="#fff" stroke="#505050" stroke-width="1.200" stroke-linejoin="round"/><path d="M3 3.700h6.200M3 5.500h5.200M3 7.300h3.600" stroke="#9c6538" stroke-width="0.900"/></svg>
<div class="c " style="left:192px;top:196.0px;width:54px;height:22.0px;background:#fff;"><span style="left:5.5px">1.2.2</span></div>
<div class="c" style="left:246px;top:196.0px;width:16.5px;height:22.0px;background:#fff;"></div>
<div class="cb" style="left:249.3px;top:201.1px;"></div>
<div class="c " style="left:262.5px;top:196.0px;width:412.5px;height:22.0px;background:#f0f0f0;"><span style="left:5px">Schalung Brückenüberbau Deckschalung GF-Schalungspl.</span></div>
<div class="c g n" style="left:675px;top:196.0px;width:65.5px;height:22.0px;background:#f0f0f0;"><span style="left:5px">1520</span></div>
<div class="c " style="left:740.5px;top:196.0px;width:41.0px;height:22.0px;background:#f0f0f0;"><span style="left:4.6px">m²</span></div>
<div class="a" style="left:738.3px;top:196.0px;width:1.7px;height:22.0px;background:#2fc24e"></div>
<div class="c n" style="left:781.5px;top:196.0px;width:106.5px;height:22.0px;background:#f0f0f0;"><span style="right:5px">38,07</span></div>
<div class="c" style="left:888px;top:196.0px;width:46.5px;height:22.0px;background:#fff;"></div>
<div class="c" style="left:934.5px;top:196.0px;width:143.0px;height:22.0px;background:#f0f0f0;"></div>
<div class="a" style="left:936.2px;top:197.7px;width:3.2px;height:18.6px;border:1px solid #93a5c6;background:linear-gradient(90deg,#8aa258 0%,#8aa258 21%,#b9b68f 36%,#b9b68f 44%,#dfe3cd 64%,#f6f7f0 80%,#fff 100%)"></div>
<div class="c n" style="left:934.5px;top:196.0px;width:143px;height:22.0px;background:transparent"><span style="right:4.5px">57.866,40</span></div>
<div class="c" style="left:1077.5px;top:196.0px;width:183.0px;height:22.0px;background:#f0f0f0;"></div>
<div class="c" style="left:1260.5px;top:196.0px;width:123.0px;height:22.0px;background:#f0f0f0;"></div>
<div class="c" style="left:1383.5px;top:196.0px;width:222.0px;height:22.0px;background:#f0f0f0;"></div>
<div class="c " style="left:-1px;top:218.0px;width:42px;height:22.0px;background:#fff;color:#7a7a7a"><span style="left:6px">P</span></div>
<div class="c" style="left:41px;top:218.0px;width:16.5px;height:22.0px;background:#fff;"></div>
<div class="c" style="left:57.5px;top:218.0px;width:86.0px;height:22.0px;background:#fff;"></div>
<div class="c" style="left:143.5px;top:218.0px;width:48.5px;height:22.0px;background:#f0f0f0;"></div>
<div class="cb" style="left:116.5px;top:223.5px"></div>
<svg class="a" style="left:128.5px;top:223.5px" width="15" height="11" viewBox="0 0 15 11" fill="none"><path d="M1 1h9.300l3.900 4.500-3.900 4.500H1z" fill="#fff" stroke="#505050" stroke-width="1.200" stroke-linejoin="round"/><path d="M3 3.700h6.200M3 5.500h5.200M3 7.300h3.600" stroke="#9c6538" stroke-width="0.900"/></svg>
<div class="c " style="left:192px;top:218.0px;width:54px;height:22.0px;background:#fff;"><span style="left:5.5px">1.2.3</span></div>
<div class="c" style="left:246px;top:218.0px;width:16.5px;height:22.0px;background:#fff;"></div>
<div class="cb" style="left:249.3px;top:223.1px;"></div>
<div class="c " style="left:262.5px;top:218.0px;width:412.5px;height:22.0px;background:#f0f0f0;"><span style="left:5px">Schalung Brückenüberbau Randschalung H 50-100cm GF-Schalungspl.</span></div>
<div class="c g n" style="left:675px;top:218.0px;width:65.5px;height:22.0px;background:#f0f0f0;"><span style="left:5px">510</span></div>
<div class="c " style="left:740.5px;top:218.0px;width:41.0px;height:22.0px;background:#f0f0f0;"><span style="left:4.6px">m</span></div>
<div class="a" style="left:738.3px;top:218.0px;width:1.7px;height:22.0px;background:#2fc24e"></div>
<div class="c n" style="left:781.5px;top:218.0px;width:106.5px;height:22.0px;background:#f0f0f0;"><span style="right:5px">73,91</span></div>
<div class="c" style="left:888px;top:218.0px;width:46.5px;height:22.0px;background:#fff;"></div>
<div class="c" style="left:934.5px;top:218.0px;width:143.0px;height:22.0px;background:#f0f0f0;"></div>
<div class="a" style="left:936.2px;top:219.7px;width:2.1px;height:18.6px;border:1px solid #93a5c6;background:linear-gradient(90deg,#8aa258 0%,#8aa258 21%,#b9b68f 36%,#b9b68f 44%,#dfe3cd 64%,#f6f7f0 80%,#fff 100%)"></div>
<div class="c n" style="left:934.5px;top:218.0px;width:143px;height:22.0px;background:transparent"><span style="right:4.5px">37.694,10</span></div>
<div class="c" style="left:1077.5px;top:218.0px;width:183.0px;height:22.0px;background:#f0f0f0;"></div>
<div class="c" style="left:1260.5px;top:218.0px;width:123.0px;height:22.0px;background:#f0f0f0;"></div>
<div class="c" style="left:1383.5px;top:218.0px;width:222.0px;height:22.0px;background:#f0f0f0;"></div>
<div class="c " style="left:-1px;top:240.0px;width:42px;height:22.0px;background:#fff;color:#7a7a7a"><span style="left:6px">P</span></div>
<div class="c" style="left:41px;top:240.0px;width:16.5px;height:22.0px;background:#fff;"></div>
<div class="c" style="left:57.5px;top:240.0px;width:86.0px;height:22.0px;background:#fff;"></div>
<div class="c" style="left:143.5px;top:240.0px;width:48.5px;height:22.0px;background:#f0f0f0;"></div>
<svg class="a" style="left:128.5px;top:245.5px" width="15" height="11" viewBox="0 0 15 11" fill="none"><path d="M1 1h9.300l3.900 4.500-3.900 4.500H1z" fill="#fff" stroke="#505050" stroke-width="1.200" stroke-linejoin="round"/><path d="M3 3.700h6.200M3 5.500h5.200M3 7.300h3.600" stroke="#9c6538" stroke-width="0.900"/></svg>
<div class="c " style="left:192px;top:240.0px;width:54px;height:22.0px;background:#fff;"><span style="left:5.5px">1.2.4</span></div>
<div class="c" style="left:246px;top:240.0px;width:16.5px;height:22.0px;background:#fff;"></div>
<div class="cb" style="left:249.3px;top:245.1px;"></div>
<div class="c " style="left:262.5px;top:240.0px;width:412.5px;height:22.0px;background:#f0f0f0;"><span style="left:5px">Schalung Brückenpfeiler rund SB2</span></div>
<div class="c g n" style="left:675px;top:240.0px;width:65.5px;height:22.0px;background:#f0f0f0;"><span style="left:5px">1210</span></div>
<div class="c " style="left:740.5px;top:240.0px;width:41.0px;height:22.0px;background:#f0f0f0;"><span style="left:4.6px">m²</span></div>
<div class="a" style="left:738.3px;top:240.0px;width:1.7px;height:22.0px;background:#2fc24e"></div>
<div class="c n" style="left:781.5px;top:240.0px;width:106.5px;height:22.0px;background:#f0f0f0;"><span style="right:5px">150,82</span></div>
<div class="c" style="left:888px;top:240.0px;width:46.5px;height:22.0px;background:#fff;"></div>
<div class="c" style="left:934.5px;top:240.0px;width:143.0px;height:22.0px;background:#f0f0f0;"></div>
<div class="a" style="left:936.2px;top:241.7px;width:10.0px;height:18.6px;border:1px solid #93a5c6;background:linear-gradient(90deg,#8aa258 0%,#8aa258 21%,#b9b68f 36%,#b9b68f 44%,#dfe3cd 64%,#f6f7f0 80%,#fff 100%)"></div>
<div class="c n" style="left:934.5px;top:240.0px;width:143px;height:22.0px;background:transparent"><span style="right:4.5px">182.492,20</span></div>
<div class="c" style="left:1077.5px;top:240.0px;width:183.0px;height:22.0px;background:#f0f0f0;"></div>
<div class="c" style="left:1260.5px;top:240.0px;width:123.0px;height:22.0px;background:#f0f0f0;"></div>
<div class="c" style="left:1383.5px;top:240.0px;width:222.0px;height:22.0px;background:#f0f0f0;"></div>
<div class="c " style="left:-1px;top:262.0px;width:42px;height:22.0px;background:#fff;color:#7a7a7a"><span style="left:6px">S2</span></div>
<div class="c" style="left:41px;top:262.0px;width:16.5px;height:22.0px;background:#fff;"></div>
<div class="c" style="left:57.5px;top:262.0px;width:71.0px;height:22.0px;background:#fff;"></div>
<div class="c" style="left:128.5px;top:262.0px;width:63.5px;height:22.0px;background:#f0f0f0;"></div>
<svg class="a" style="left:89.7px;top:269.8px" width="10" height="8" viewBox="0 0 10 8" fill="none"><path d="M1.5 2l3.5 3.6L8.5 2" stroke="#555" stroke-width="1.1"/></svg>
<svg class="a" style="left:113.5px;top:266.5px" width="15" height="13" viewBox="0 0 15 13" fill="none"><rect x="1.200" y="1.300" width="8.600" height="4.300" rx="0.800" fill="#ecd0b0" stroke="#9c6538" stroke-width="1.300"/><rect x="5.200" y="7.400" width="8.600" height="4.300" rx="0.800" fill="#ecd0b0" stroke="#9c6538" stroke-width="1.300"/><path d="M3.200 3.450h4.600M7.200 9.550h4.600" stroke="#f7e6d2" stroke-width="0.900"/></svg>
<div class="c sb" style="left:192px;top:262.0px;width:54px;height:22.0px;background:#fff;"><span style="left:6px">1.3</span></div>
<div class="c" style="left:246px;top:262.0px;width:16.5px;height:22.0px;background:#fff;"></div>
<div class="cb" style="left:249.3px;top:267.1px;"></div>
<div class="c sb" style="left:262.5px;top:262.0px;width:412.5px;height:22.0px;background:#fff;"><span style="left:5.5px">Bewehrung</span></div>
<div class="c" style="left:675px;top:262.0px;width:65.5px;height:22.0px;background:#f0f0f0;"></div>
<div class="c" style="left:740.5px;top:262.0px;width:41.0px;height:22.0px;background:#f0f0f0;"></div>
<div class="c" style="left:781.5px;top:262.0px;width:106.5px;height:22.0px;background:#f0f0f0;"></div>
<div class="c" style="left:888px;top:262.0px;width:46.5px;height:22.0px;background:#fff;"></div>
<div class="c" style="left:934.5px;top:262.0px;width:143.0px;height:22.0px;background:#f0f0f0;"></div>
<div class="c sb nb" style="left:1077.5px;top:262.0px;width:183.0px;height:22.0px;background:#f0f0f0;"><span style="right:5px">4.820.492,90</span></div>
<div class="c sb nb" style="left:1260.5px;top:262.0px;width:123.0px;height:22.0px;background:#f0f0f0;"><span style="right:5px">915.893,65</span></div>
<div class="c" style="left:1383.5px;top:262.0px;width:222.0px;height:22.0px;background:#f0f0f0;"></div>
<div class="a" style="left:1386px;top:264.5px;width:100.3px;height:17px;background:#f9bf8c"></div>
<div class="c sb nb" style="left:1383.5px;top:262.0px;width:222px;height:22.0px;background:transparent"><span style="right:4.5px">5.736.386,55</span></div>
<div class="c sb nb" style="left:1386px;top:262.0px;width:100.3px;height:22.0px;background:transparent;color:#fff"><span style="left:215.0px;transform:translate(-100%,-50%)">5.736.386,55</span></div>
<div class="c " style="left:-1px;top:284.0px;width:42px;height:22.0px;background:#fff;color:#7a7a7a"><span style="left:6px">P</span></div>
<div class="c" style="left:41px;top:284.0px;width:16.5px;height:22.0px;background:#fff;"></div>
<div class="c" style="left:57.5px;top:284.0px;width:86.0px;height:22.0px;background:#fff;"></div>
<div class="c" style="left:143.5px;top:284.0px;width:48.5px;height:22.0px;background:#f0f0f0;"></div>
<svg class="a" style="left:128.5px;top:289.5px" width="15" height="11" viewBox="0 0 15 11" fill="none"><path d="M1 1h9.300l3.900 4.500-3.900 4.500H1z" fill="#fff" stroke="#505050" stroke-width="1.200" stroke-linejoin="round"/><path d="M3 3.700h6.200M3 5.500h5.200M3 7.300h3.600" stroke="#9c6538" stroke-width="0.900"/></svg>
<div class="c " style="left:192px;top:284.0px;width:54px;height:22.0px;background:#fff;"><span style="left:5.5px">1.3.1</span></div>
<div class="c" style="left:246px;top:284.0px;width:16.5px;height:22.0px;background:#fff;"></div>
<div class="cb" style="left:249.3px;top:289.1px;"></div>
<div class="c " style="left:262.5px;top:284.0px;width:412.5px;height:22.0px;background:#f0f0f0;"><span style="left:5px">Betonstabstahl B500A Durchm. 10-16mm Widerlager</span></div>
<div class="c g n" style="left:675px;top:284.0px;width:65.5px;height:22.0px;background:#f0f0f0;"><span style="left:5px">610</span></div>
<div class="c " style="left:740.5px;top:284.0px;width:41.0px;height:22.0px;background:#f0f0f0;"><span style="left:4.6px">t</span></div>
<div class="a" style="left:738.3px;top:284.0px;width:1.7px;height:22.0px;background:#2fc24e"></div>
<div class="c n" style="left:781.5px;top:284.0px;width:106.5px;height:22.0px;background:#f0f0f0;"><span style="right:5px">2.135,74</span></div>
<div class="c" style="left:888px;top:284.0px;width:46.5px;height:22.0px;background:#fff;"></div>
<div class="c" style="left:934.5px;top:284.0px;width:143.0px;height:22.0px;background:#f0f0f0;"></div>
<div class="a" style="left:936.2px;top:285.7px;width:71.4px;height:18.6px;border:1px solid #93a5c6;background:linear-gradient(90deg,#8aa258 0%,#8aa258 21%,#b9b68f 36%,#b9b68f 44%,#dfe3cd 64%,#f6f7f0 80%,#fff 100%)"></div>
<div class="c n" style="left:934.5px;top:284.0px;width:143px;height:22.0px;background:transparent"><span style="right:4.5px">1.302.801,40</span></div>
<div class="c" style="left:1077.5px;top:284.0px;width:183.0px;height:22.0px;background:#f0f0f0;"></div>
<div class="c" style="left:1260.5px;top:284.0px;width:123.0px;height:22.0px;background:#f0f0f0;"></div>
<div class="c" style="left:1383.5px;top:284.0px;width:222.0px;height:22.0px;background:#f0f0f0;"></div>
<div class="c " style="left:-1px;top:306.0px;width:42px;height:22.0px;background:#fff;color:#7a7a7a"><span style="left:6px">P</span></div>
<div class="c" style="left:41px;top:306.0px;width:16.5px;height:22.0px;background:#fff;"></div>
<div class="c" style="left:57.5px;top:306.0px;width:86.0px;height:22.0px;background:#fff;"></div>
<div class="c" style="left:143.5px;top:306.0px;width:48.5px;height:22.0px;background:#f0f0f0;"></div>
<svg class="a" style="left:128.5px;top:311.5px" width="15" height="11" viewBox="0 0 15 11" fill="none"><path d="M1 1h9.300l3.900 4.500-3.900 4.500H1z" fill="#fff" stroke="#505050" stroke-width="1.200" stroke-linejoin="round"/><path d="M3 3.700h6.200M3 5.500h5.200M3 7.300h3.600" stroke="#9c6538" stroke-width="0.900"/></svg>
<div class="c " style="left:192px;top:306.0px;width:54px;height:22.0px;background:#fff;"><span style="left:5.5px">1.3.2</span></div>
<div class="c" style="left:246px;top:306.0px;width:16.5px;height:22.0px;background:#fff;"></div>
<div class="cb" style="left:249.3px;top:311.1px;"></div>
<div class="c " style="left:262.5px;top:306.0px;width:412.5px;height:22.0px;background:#f0f0f0;"><span style="left:5px">Betonstabstahl B500A Durchm. 10-16mm Brückenpfeiler</span></div>
<div class="c g n" style="left:675px;top:306.0px;width:65.5px;height:22.0px;background:#f0f0f0;"><span style="left:5px">1010</span></div>
<div class="c " style="left:740.5px;top:306.0px;width:41.0px;height:22.0px;background:#f0f0f0;"><span style="left:4.6px">t</span></div>
<div class="a" style="left:738.3px;top:306.0px;width:1.7px;height:22.0px;background:#2fc24e"></div>
<div class="c n" style="left:781.5px;top:306.0px;width:106.5px;height:22.0px;background:#f0f0f0;"><span style="right:5px">2.501,65</span></div>
<div class="c" style="left:888px;top:306.0px;width:46.5px;height:22.0px;background:#fff;"></div>
<div class="c" style="left:934.5px;top:306.0px;width:143.0px;height:22.0px;background:#f0f0f0;"></div>
<div class="a" style="left:936.2px;top:307.7px;width:138.5px;height:18.6px;border:1px solid #93a5c6;background:linear-gradient(90deg,#8aa258 0%,#8aa258 21%,#b9b68f 36%,#b9b68f 44%,#dfe3cd 64%,#f6f7f0 80%,#fff 100%)"></div>
<div class="c n" style="left:934.5px;top:306.0px;width:143px;height:22.0px;background:transparent"><span style="right:4.5px">2.526.666,50</span></div>
<div class="c" style="left:1077.5px;top:306.0px;width:183.0px;height:22.0px;background:#f0f0f0;"></div>
<div class="c" style="left:1260.5px;top:306.0px;width:123.0px;height:22.0px;background:#f0f0f0;"></div>
<div class="c" style="left:1383.5px;top:306.0px;width:222.0px;height:22.0px;background:#f0f0f0;"></div>
<div class="c " style="left:-1px;top:328.0px;width:42px;height:22.0px;background:#fff;color:#7a7a7a"><span style="left:6px">P</span></div>
<div class="c" style="left:41px;top:328.0px;width:16.5px;height:22.0px;background:#fff;"></div>
<div class="c" style="left:57.5px;top:328.0px;width:86.0px;height:22.0px;background:#fff;"></div>
<div class="c" style="left:143.5px;top:328.0px;width:48.5px;height:22.0px;background:#f0f0f0;"></div>
<svg class="a" style="left:128.5px;top:333.5px" width="15" height="11" viewBox="0 0 15 11" fill="none"><path d="M1 1h9.300l3.900 4.500-3.900 4.500H1z" fill="#fff" stroke="#505050" stroke-width="1.200" stroke-linejoin="round"/><path d="M3 3.700h6.200M3 5.500h5.200M3 7.300h3.600" stroke="#9c6538" stroke-width="0.900"/></svg>
<div class="c " style="left:192px;top:328.0px;width:54px;height:22.0px;background:#fff;"><span style="left:5.5px">1.3.3</span></div>
<div class="c" style="left:246px;top:328.0px;width:16.5px;height:22.0px;background:#fff;"></div>
<div class="cb" style="left:249.3px;top:333.1px;"></div>
<div class="c " style="left:262.5px;top:328.0px;width:412.5px;height:22.0px;background:#f0f0f0;"><span style="left:5px">Betonstahlmatte B500A Lagermatte Brückenpfeiler</span></div>
<div class="c g n" style="left:675px;top:328.0px;width:65.5px;height:22.0px;background:#f0f0f0;"><span style="left:5px">50</span></div>
<div class="c " style="left:740.5px;top:328.0px;width:41.0px;height:22.0px;background:#f0f0f0;"><span style="left:4.6px">t</span></div>
<div class="a" style="left:738.3px;top:328.0px;width:1.7px;height:22.0px;background:#2fc24e"></div>
<div class="c n" style="left:781.5px;top:328.0px;width:106.5px;height:22.0px;background:#f0f0f0;"><span style="right:5px">2.632,82</span></div>
<div class="c" style="left:888px;top:328.0px;width:46.5px;height:22.0px;background:#fff;"></div>
<div class="c" style="left:934.5px;top:328.0px;width:143.0px;height:22.0px;background:#f0f0f0;"></div>
<div class="a" style="left:936.2px;top:329.7px;width:7.2px;height:18.6px;border:1px solid #93a5c6;background:linear-gradient(90deg,#8aa258 0%,#8aa258 21%,#b9b68f 36%,#b9b68f 44%,#dfe3cd 64%,#f6f7f0 80%,#fff 100%)"></div>
<div class="c n" style="left:934.5px;top:328.0px;width:143px;height:22.0px;background:transparent"><span style="right:4.5px">131.641,00</span></div>
<div class="c" style="left:1077.5px;top:328.0px;width:183.0px;height:22.0px;background:#f0f0f0;"></div>
<div class="c" style="left:1260.5px;top:328.0px;width:123.0px;height:22.0px;background:#f0f0f0;"></div>
<div class="c" style="left:1383.5px;top:328.0px;width:222.0px;height:22.0px;background:#f0f0f0;"></div>
<div class="c " style="left:-1px;top:350.0px;width:42px;height:22.0px;background:#fff;color:#7a7a7a"><span style="left:6px">P</span></div>
<div class="c" style="left:41px;top:350.0px;width:16.5px;height:22.0px;background:#fff;"></div>
<div class="c" style="left:57.5px;top:350.0px;width:86.0px;height:22.0px;background:#fff;"></div>
<div class="c" style="left:143.5px;top:350.0px;width:48.5px;height:22.0px;background:#f0f0f0;"></div>
<svg class="a" style="left:128.5px;top:355.5px" width="15" height="11" viewBox="0 0 15 11" fill="none"><path d="M1 1h9.300l3.900 4.500-3.900 4.500H1z" fill="#fff" stroke="#505050" stroke-width="1.200" stroke-linejoin="round"/><path d="M3 3.700h6.200M3 5.500h5.200M3 7.300h3.600" stroke="#9c6538" stroke-width="0.900"/></svg>
<div class="c " style="left:192px;top:350.0px;width:54px;height:22.0px;background:#fff;"><span style="left:5.5px">1.3.4</span></div>
<div class="c" style="left:246px;top:350.0px;width:16.5px;height:22.0px;background:#fff;"></div>
<div class="cb" style="left:249.3px;top:355.1px;"></div>
<div class="c " style="left:262.5px;top:350.0px;width:412.5px;height:22.0px;background:#f0f0f0;"><span style="left:5px">Spannstahl Hüllrohr Brückenüberbau</span></div>
<div class="c g n" style="left:675px;top:350.0px;width:65.5px;height:22.0px;background:#f0f0f0;"><span style="left:5px">200</span></div>
<div class="c " style="left:740.5px;top:350.0px;width:41.0px;height:22.0px;background:#f0f0f0;"><span style="left:4.6px">t</span></div>
<div class="a" style="left:738.3px;top:350.0px;width:1.7px;height:22.0px;background:#2fc24e"></div>
<div class="c n" style="left:781.5px;top:350.0px;width:106.5px;height:22.0px;background:#f0f0f0;"><span style="right:5px">4.296,92</span></div>
<div class="c" style="left:888px;top:350.0px;width:46.5px;height:22.0px;background:#fff;"></div>
<div class="c" style="left:934.5px;top:350.0px;width:143.0px;height:22.0px;background:#f0f0f0;"></div>
<div class="a" style="left:936.2px;top:351.7px;width:47.1px;height:18.6px;border:1px solid #93a5c6;background:linear-gradient(90deg,#8aa258 0%,#8aa258 21%,#b9b68f 36%,#b9b68f 44%,#dfe3cd 64%,#f6f7f0 80%,#fff 100%)"></div>
<div class="c n" style="left:934.5px;top:350.0px;width:143px;height:22.0px;background:transparent"><span style="right:4.5px">859.384,00</span></div>
<div class="c" style="left:1077.5px;top:350.0px;width:183.0px;height:22.0px;background:#f0f0f0;"></div>
<div class="c" style="left:1260.5px;top:350.0px;width:123.0px;height:22.0px;background:#f0f0f0;"></div>
<div class="c" style="left:1383.5px;top:350.0px;width:222.0px;height:22.0px;background:#f0f0f0;"></div>
<div class="c " style="left:-1px;top:372.0px;width:42px;height:22.0px;background:#fff;color:#7a7a7a"><span style="left:6px">S1</span></div>
<div class="c" style="left:41px;top:372.0px;width:16.5px;height:22.0px;background:#fff;"></div>
<div class="c" style="left:57.5px;top:372.0px;width:56.5px;height:22.0px;background:#fff;"></div>
<div class="c" style="left:114px;top:372.0px;width:78px;height:22.0px;background:#f0f0f0;"></div>
<svg class="a" style="left:75.7px;top:379.8px" width="10" height="8" viewBox="0 0 10 8" fill="none"><path d="M1.5 2l3.5 3.6L8.5 2" stroke="#555" stroke-width="1.1"/></svg>
<svg class="a" style="left:99px;top:376.5px" width="15" height="13" viewBox="0 0 15 13" fill="none"><rect x="1.200" y="1.300" width="8.600" height="4.300" rx="0.800" fill="#ecd0b0" stroke="#9c6538" stroke-width="1.300"/><rect x="5.200" y="7.400" width="8.600" height="4.300" rx="0.800" fill="#ecd0b0" stroke="#9c6538" stroke-width="1.300"/><path d="M3.200 3.450h4.600M7.200 9.550h4.600" stroke="#f7e6d2" stroke-width="0.900"/></svg>
<div class="c sb" style="left:192px;top:372.0px;width:54px;height:22.0px;background:#fff;"><span style="left:6px">2</span></div>
<div class="c" style="left:246px;top:372.0px;width:16.5px;height:22.0px;background:#fff;"></div>
<div class="cb" style="left:249.3px;top:377.1px;"></div>
<div class="c sb" style="left:262.5px;top:372.0px;width:412.5px;height:22.0px;background:#fff;"><span style="left:5.5px">Straßenbau</span></div>
<div class="c" style="left:675px;top:372.0px;width:65.5px;height:22.0px;background:#f0f0f0;"></div>
<div class="c" style="left:740.5px;top:372.0px;width:41.0px;height:22.0px;background:#f0f0f0;"></div>
<div class="c" style="left:781.5px;top:372.0px;width:106.5px;height:22.0px;background:#f0f0f0;"></div>
<div class="c" style="left:888px;top:372.0px;width:46.5px;height:22.0px;background:#fff;"></div>
<div class="c" style="left:934.5px;top:372.0px;width:143.0px;height:22.0px;background:#f0f0f0;"></div>
<div class="c sb nb" style="left:1077.5px;top:372.0px;width:183.0px;height:22.0px;background:#f0f0f0;"><span style="right:5px">1.076.940,38</span></div>
<div class="c sb nb" style="left:1260.5px;top:372.0px;width:123.0px;height:22.0px;background:#f0f0f0;"><span style="right:5px">204.618,67</span></div>
<div class="c" style="left:1383.5px;top:372.0px;width:222.0px;height:22.0px;background:#f0f0f0;"></div>
<div class="a" style="left:1386px;top:374.5px;width:3.3px;height:17px;background:#f9bf8c"></div>
<div class="c sb nb" style="left:1383.5px;top:372.0px;width:222px;height:22.0px;background:transparent"><span style="right:4.5px">1.281.559,05</span></div>
<div class="c sb nb" style="left:1386px;top:372.0px;width:3.3px;height:22.0px;background:transparent;color:#fff"><span style="left:215.0px;transform:translate(-100%,-50%)">1.281.559,05</span></div>
<div class="hl" style="left:41px;top:41.5px;width:1564.5px"></div><div class="hl" style="left:41px;top:63.5px;width:1564.5px"></div><div class="hl" style="left:41px;top:85.5px;width:1564.5px"></div><div class="hl" style="left:41px;top:107.5px;width:1564.5px"></div><div class="hl" style="left:41px;top:129.5px;width:1564.5px"></div><div class="hl" style="left:41px;top:151.5px;width:1564.5px"></div><div class="hl" style="left:41px;top:173.5px;width:1564.5px"></div><div class="hl" style="left:41px;top:195.5px;width:1564.5px"></div><div class="hl" style="left:41px;top:217.5px;width:1564.5px"></div><div class="hl" style="left:41px;top:239.5px;width:1564.5px"></div><div class="hl" style="left:41px;top:261.5px;width:1564.5px"></div><div class="hl" style="left:41px;top:283.5px;width:1564.5px"></div><div class="hl" style="left:41px;top:305.5px;width:1564.5px"></div><div class="hl" style="left:41px;top:327.5px;width:1564.5px"></div><div class="hl" style="left:41px;top:349.5px;width:1564.5px"></div><div class="hl" style="left:41px;top:371.5px;width:1564.5px"></div><div class="hl" style="left:41px;top:393.5px;width:1564.5px"></div>
<div class="hl" style="left:0;top:19.6px;width:1640px;background:#bcc2c5"></div>
<div class="vl" style="left:40.5px;top:20.0px;height:370px;background:#dadada"></div>
<div class="vl" style="left:57.0px;top:20.0px;height:370px;background:#dadada"></div>
<div class="vl" style="left:245.5px;top:20.0px;height:370px;background:#dadada"></div>
<div class="vl" style="left:262.0px;top:20.0px;height:370px;background:#dadada"></div>
<div class="vl" style="left:674.5px;top:20.0px;height:370px;background:#dadada"></div>
<div class="vl" style="left:740.0px;top:20.0px;height:370px;background:#dadada"></div>
<div class="vl" style="left:781.0px;top:20.0px;height:370px;background:#dadada"></div>
<div class="vl" style="left:887.5px;top:20.0px;height:370px;background:#dadada"></div>
<div class="vl" style="left:934.0px;top:20.0px;height:370px;background:#dadada"></div>
<div class="vl" style="left:1077.0px;top:20.0px;height:370px;background:#dadada"></div>
<div class="vl" style="left:1260.0px;top:20.0px;height:370px;background:#dadada"></div>
<div class="vl" style="left:1383.0px;top:20.0px;height:370px;background:#dadada"></div>
<div class="vl" style="left:1605.0px;top:20.0px;height:370px;background:#dadada"></div>
<div class="vl" style="left:191.5px;top:0.7px;height:390px;background:#9c9c9c;width:1.2px"></div>
<div class="a" style="left:1616.5px;top:20.7px;width:12.5px;height:365px;background:#ececec;border:1px solid #d0d0d0"></div>
<div class="a" style="left:1616.5px;top:20.7px;width:12.5px;height:221px;background:#fff;border:1px solid #cfcfcf"></div>
<div class="a" style="left:1616.5px;top:20.7px;width:12.5px;height:13.5px;background:#fff;border:1px solid #cfcfcf"></div>
<svg class="a" style="left:1619.5px;top:24.7px" width="7" height="5" viewBox="0 0 7 5"><path d="M0.5 4h6l-3-3.3z" fill="#8a8a8a"/></svg>
<div class="a" style="left:1616.5px;top:371.7px;width:12.5px;height:14px;background:#fff;border:1px solid #cfcfcf"></div>
<svg class="a" style="left:1619.5px;top:376.2px" width="7" height="5" viewBox="0 0 7 5"><path d="M0.5 0.8h6l-3 3.3z" fill="#8a8a8a"/></svg>
</div>
<div class="a" style="left:49px;top:503px;width:1634px;height:22px;background:#fff;"></div>
<div class="t sm" style="left:61px;top:515.3px;transform:translateY(-50%);font-size:8.9px">Text</div>
<div class="a" style="left:2px;top:524.5px;width:1703px;height:19.5px;background:#f0f0f0;border-top:1px solid #e2e2e2;border-bottom:1px solid #dedede;border-left:1px solid #d6d6d6"></div>
<div class="t sm" style="left:8.5px;top:534.5px;transform:translateY(-50%);font-size:8.35px;color:#606060">Summe: 9.345.492,28</div>
<div class="t sm" style="left:102px;top:534.5px;transform:translateY(-50%);font-size:8.35px;color:#606060">Auf/Ab: 0,00</div>
<div class="t sm" style="left:158.5px;top:534.5px;transform:translateY(-50%);font-size:8.35px;color:#606060">Ges.Netto: 9.345.492,28</div>
<div class="t sm" style="left:259px;top:534.5px;transform:translateY(-50%);font-size:8.35px;color:#606060">Ges.Brutto: 11.121.135,81</div>
<div class="a" style="left:98px;top:526px;width:1px;height:16px;background:#dcdcdc;"></div>
<div class="a" style="left:99px;top:526px;width:1px;height:16px;background:#fafafa;"></div>
<div class="a" style="left:154px;top:526px;width:1px;height:16px;background:#dcdcdc;"></div>
<div class="a" style="left:155px;top:526px;width:1px;height:16px;background:#fafafa;"></div>
<div class="a" style="left:255px;top:526px;width:1px;height:16px;background:#dcdcdc;"></div>
<div class="a" style="left:256px;top:526px;width:1px;height:16px;background:#fafafa;"></div>
<div class="a" style="left:363px;top:526px;width:1px;height:16px;background:#dcdcdc;"></div>
<div class="a" style="left:364px;top:526px;width:1px;height:16px;background:#fafafa;"></div>
<div class="t sm" style="right:121px;top:534.5px;transform:translateY(-50%);font-size:8.35px;color:#606060">Basissprache Deutsch/Deutschland</div>
<div class="a" style="left:1588px;top:526px;width:1px;height:16px;background:#dcdcdc;"></div>
<div class="a" style="left:1589px;top:526px;width:1px;height:16px;background:#fafafa;"></div>
<div class="t sm" style="right:6px;top:534.5px;transform:translateY(-50%);font-size:8.6px;color:#606060">Leitwährung: EUR, LV: EUR</div>
<div class="a" style="left:1px;top:552px;width:186.5px;height:27px;background:#fff;border-top:1.5px solid #808080;border-left:1px solid #d6d6d6;border-right:1px solid #dcdcdc"></div>
<svg class="a" style="left:10px;top:553px" width="24" height="24" viewBox="10 553 24 24" fill="none"><path d="M27 563V556.300H13.200V574.400H26.500" stroke="#484848" stroke-width="1.400"/><path d="M24.200 559.600c-3.300-2.100-7-.300-7 3.200s3.700 5.300 7 3.200M15.700 561.800h5.700M15.700 564h5.200" stroke="#484848" stroke-width="1.200"/><path d="M16.300 569.800c3 3.500 9.300 3.200 13.400-2.600M29.900 566.800l-3.300.400M29.900 566.800l.300 3.300" stroke="#484848" stroke-width="1.100"/></svg>
<div class="t tb" style="left:33.5px;top:561px;transform:translateY(-50%);font-size:8.35px">DIN276</div>
<div class="t sm" style="left:33px;top:571px;transform:translateY(-50%);font-size:8.35px;color:#666">A95 - Brücke 2B « Stadt Frießburg</div>
<svg class="a" style="left:171.5px;top:562px" width="9" height="9" viewBox="0 0 9 9" fill="none"><path d="M1.5 1.5l5.5 5.5M7 1.5l-5.5 5.5" stroke="#777" stroke-width="0.9"/></svg>
<svg class="a" style="left:1693px;top:562.5px" width="8" height="6" viewBox="0 0 8 6" fill="none"><path d="M1 1.5h6l-3 3z" fill="#666"/></svg>
<div class="pn" style="left:1px;top:578.5px;width:1704px;height:446px;border-left:1px solid #d6d6d6;border-top:1px solid #dcdcdc"></div>
<div class="a" style="left:1683px;top:579px;width:22px;height:428px;background:#fff;"></div>
<div class="t sm" style="left:1694px;top:590px;font-size:8.3px;color:#444;transform-origin:0 0;transform:rotate(90deg) translateY(-50%)">Eigenschaften</div>
<div class="a" style="left:1704px;top:579px;width:1px;height:428px;background:#e2e2e2;"></div>
<svg class="a" style="left:12px;top:593px" width="20" height="12" viewBox="0 0 20 12" fill="none"><path d="M1.5 1.5h17M1.5 6h17M1.5 10.5h17" stroke="#6a6a6a" stroke-width="1"/></svg>
<svg class="a" style="left:54px;top:581px" width="28" height="31" viewBox="54 581 28 31" fill="none"><path d="M75.200 594V584.300H56.800V608.700H75.200" stroke="#484848" stroke-width="1.600"/><path d="M71.200 589.200c-4.500-2.800-9.600-.300-9.600 4.400s5.100 7.100 9.600 4.300M59.600 592.300h7.800M59.600 595.300h7" stroke="#484848" stroke-width="1.400"/><path d="M60.300 603c4 4.800 12.500 4.400 18-3.200M78.700 599.200l-4.300.500M78.700 599.200l.400 4.300" stroke="#484848" stroke-width="1.300"/></svg>
<div class="t tb" style="left:83.5px;top:592px;transform:translateY(-50%);">Bereich:</div>
<div class="t sm" style="left:83.5px;top:602.5px;transform:translateY(-50%);font-size:8.35px">Dokumentation</div>
<svg class="a" style="left:141px;top:595.5px" width="7" height="5" viewBox="0 0 7 5" fill="none"><path d="M0.700 0.600h5.200l-2.600 2.900z" fill="#444"/></svg>
<svg class="a" style="left:155px;top:580px" width="25" height="32" viewBox="155 580 25 32" fill="none"><path d="M158.300 584.200H176.800V598.400L167.500 603.800 158.300 598.400z" stroke="#484848" stroke-width="1.500"/><path d="M162.400 588.800h10.400" stroke="#36b44b" stroke-width="1.200"/><path d="M162.400 591.900h10.400" stroke="#9c5b3a" stroke-width="1.200"/><path d="M162.400 595h10.400" stroke="#667080" stroke-width="1.200"/><rect x="159.500" y="607.300" width="2.800" height="2.400" fill="#36b44b"/><rect x="166" y="607.300" width="2.800" height="2.400" fill="#8d2b1f"/><rect x="172.500" y="607.300" width="2.800" height="2.400" fill="#484848"/></svg>
<div class="t tb" style="left:190px;top:592px;transform:translateY(-50%);">Stadium:</div>
<div class="t sm" style="left:190px;top:602.5px;transform:translateY(-50%);font-size:8.35px">Kostenschätzung</div>
<svg class="a" style="left:254.5px;top:595.5px" width="7" height="5" viewBox="0 0 7 5" fill="none"><path d="M0.700 0.600h5.200l-2.600 2.900z" fill="#444"/></svg>
<svg class="a" style="left:52px;top:617.2px" width="18" height="18" viewBox="0 0 18 18" fill="none"><circle cx="8.800" cy="8.800" r="7" stroke="#484848" stroke-width="1.100"/><path d="M5.200 9l2.600 2.700 4.700-5.100" stroke="#36b44b" stroke-width="1.500"/></svg>
<svg class="a" style="left:76.5px;top:617.2px" width="18" height="18" viewBox="0 0 18 18" fill="none"><path d="M2 2h11l3 3v11H2z" fill="#b9b9b9" stroke="#a0a0a0" stroke-width="1"/><rect x="5" y="10.500" width="8" height="5.500" fill="#efefef" stroke="#a5a5a5" stroke-width="0.800"/><rect x="5.500" y="2" width="6" height="4" fill="#c9c9c9" stroke="#a5a5a5" stroke-width="0.700"/></svg>
<svg class="a" style="left:101px;top:617.2px" width="18" height="18" viewBox="0 0 18 18" fill="none"><rect x="2.300" y="2" width="13.500" height="13.500" rx="1.500" stroke="#484848" stroke-width="1.200"/><path d="M5.900 5.600l6.300 6.300M12.200 5.600l-6.300 6.300" stroke="#484848" stroke-width="1.300"/></svg>
<svg class="a" style="left:125.5px;top:617.2px" width="18" height="18" viewBox="0 0 18 18" fill="none"><path d="M4 4.800c4.500-4 11.500-.800 11.300 5.200-.200 3.600-3 6-6.300 6" stroke="#8c8c8c" stroke-width="1.100"/><path d="M2.600 1.800l.300 4.200 4.100-.800" stroke="#8c8c8c" stroke-width="1"/></svg>
<div class="a" style="left:148px;top:615.2px;width:1px;height:22px;background:#e0e0e0;"></div>
<svg class="a" style="left:154px;top:617.2px" width="18" height="18" viewBox="0 0 18 18" fill="none"><path d="M1.800 3.500h14.500" stroke="#666" stroke-width="1"/><path d="M9 7.800l5 6.400H4z" fill="#2f7df6"/><path d="M9 10.600l1.900 2.400H7.100z" fill="#9cc2ff"/></svg>
<svg class="a" style="left:178px;top:617.2px" width="18" height="18" viewBox="0 0 18 18" fill="none"><path d="M1.800 3h14.500" stroke="#666" stroke-width="1"/><path d="M3.500 5h11" stroke="#9a9a9a" stroke-width="0.900"/><path d="M9 15l5-6.800H4z" fill="#2f7df6"/><path d="M9 12.200l1.900-2.600H7.100z" fill="#9cc2ff"/></svg>
<svg class="a" style="left:203px;top:617.2px" width="18" height="18" viewBox="0 0 18 18" fill="none"><path d="M9 9.300l5-6.500H4z" fill="#2f7df6"/><path d="M9 6.600l1.900-2.500H7.100z" fill="#b9d3ff"/><path d="M1.500 14.500h15" stroke="#777" stroke-width="1.100"/></svg>
<div class="a" style="left:226px;top:615.2px;width:1px;height:22px;background:#e0e0e0;"></div>
<svg class="a" style="left:231.5px;top:617.2px" width="18" height="18" viewBox="0 0 18 18" fill="none"><path d="M4.800 16V2M1.300 6l3.500-4 3.500 4" stroke="#f3922e" stroke-width="1.400"/><path d="M7.800 5.200h8.500M7.800 10.600h8.500M7.800 15.400h8.500" stroke="#6e6e6e" stroke-width="1.100"/></svg>
<svg class="a" style="left:256px;top:617.2px" width="18" height="18" viewBox="0 0 18 18" fill="none"><path d="M1.300 5.200h9M1.300 10.600h9M1.300 15.400h9" stroke="#6e6e6e" stroke-width="1.100"/><path d="M13 2v14M9.500 12l3.500 4 3.500-4" stroke="#f3922e" stroke-width="1.400"/></svg>
<svg class="a" style="left:280.5px;top:617.2px" width="18" height="18" viewBox="0 0 18 18" fill="none"><path d="M1.500 3.300h15M1.500 8.600h15" stroke="#666" stroke-width="1"/><path d="M1.500 12h15" stroke="#999" stroke-width="0.800"/><path d="M5 8l7.500 7.500M12.500 8l-7.500 7.500" stroke="#8d2b1f" stroke-width="1.500"/></svg>
<svg class="a" style="left:305px;top:617.2px" width="18" height="18" viewBox="0 0 18 18" fill="none"><path d="M16 9H2.500M8 3.500L2.500 9 8 14.500" stroke="#f3922e" stroke-width="1.400"/></svg>
<svg class="a" style="left:330px;top:617.2px" width="18" height="18" viewBox="0 0 18 18" fill="none"><path d="M2 9h13.500M10 3.500L15.500 9 10 14.500" stroke="#f3922e" stroke-width="1.400"/></svg>
<div class="t sm" style="left:1526px;top:626.3px;transform:translateY(-50%);font-size:8.35px;color:#555">Nur aktive Leistungen sichtbar</div>
<div class="a" style="left:1644.5px;top:620.8px;width:35.5px;height:10.4px;border-radius:5.2px;background:#7c7e86"></div>
<div class="a" style="left:1671px;top:622.7px;width:6.6px;height:6.6px;border-radius:3.3px;background:#8a2626"></div>
<svg class="a" style="left:12px;top:620.6px" width="28" height="33" viewBox="12 96 28 33" fill="none"><path d="M16.4 100.200H27.700L34.300 106.800V124.900H16.400z" stroke="#484848" stroke-width="1.6" stroke-linejoin="round"/><path d="M27.700 100.200V106.800H34.300" stroke="#484848" stroke-width="1.300"/><path d="M20.500 110.200h1.700M20.500 115.100h1.700M20.500 120.100h1.700" stroke="#484848" stroke-width="1.500"/><path d="M23.800 110.200h6.700M23.800 120.100h6.700" stroke="#484848" stroke-width="1.400"/><path d="M23.800 115.100h6.700" stroke="#484848" stroke-width="1.400"/></svg>
<svg class="a" style="left:10px;top:658.3px" width="30" height="28" viewBox="10 134 30 28" fill="none"><path d="M16.400 144V157.400H34.300V139.900H21.500" stroke="#484848" stroke-width="1.6"/><path d="M14 137.200L29.800 152.800M30 144.200V153H20.800" stroke="#f3922e" stroke-width="1.500"/></svg>
<svg class="a" style="left:10px;top:694.3px" width="30" height="28" viewBox="10 170 30 28" fill="none"><path d="M16.400 182.500V193.300H34.300V176H25" stroke="#484848" stroke-width="1.6"/><path d="M30 189L14.500 174M14.300 182.300V173.800H23" stroke="#2f7df6" stroke-width="1.600"/></svg>
<svg class="a" style="left:10px;top:732px" width="30" height="28" viewBox="10 732 30 28" fill="none"><path d="M25.300 737L28.600 742.300H22z" stroke="#484848" stroke-width="1.300" stroke-linejoin="round"/><rect x="14.500" y="746.600" width="7.600" height="7.600" stroke="#484848" stroke-width="1.400"/><circle cx="31.500" cy="751" r="4.900" stroke="#484848" stroke-width="1.400"/></svg>
<svg class="a" style="left:10px;top:766.7px" width="30" height="30" viewBox="10 422 30 30" fill="none"><path d="M22.500 447.300H16.400V426.200H34.300V434M34.300 440V447.300H27" stroke="#484848" stroke-width="1.6"/><path d="M19.200 430.600h2.300M19.200 435.600h2.300M23.800 430.600h7.800M23.800 435.600h5.800" stroke="#484848" stroke-width="1.500"/><path d="M20.300 441.500l4.300 4.100 9.800-10" stroke="#36b44b" stroke-width="1.900"/></svg>
<svg class="a" style="left:10px;top:801px" width="30" height="33" viewBox="10 801 30 33" fill="none"><path d="M13.800 817c0-6.500 5.200-11.600 11.500-11.600 4.300 0 8.300 2.500 10.300 6.200" stroke="#484848" stroke-width="1.500"/><path d="M36.600 805.800V812.300H30" stroke="#484848" stroke-width="1.500"/><path d="M36.900 817.300c0 6.500-5.200 11.600-11.500 11.600-4.300 0-8.300-2.500-10.300-6.200" stroke="#484848" stroke-width="1.500"/><path d="M14.100 828.500V822H20.700" stroke="#484848" stroke-width="1.500"/></svg>
<svg class="a" style="left:10px;top:839.6px" width="30" height="27" viewBox="10 459 30 27" fill="none"><path d="M16.800 481.300H14.500V463.700H23.800L25.300 465.800H36V475.500" stroke="#484848" stroke-width="1.6"/><path d="M14.500 463.700H23.800" stroke="#6b2a24" stroke-width="1.6"/><rect x="19.200" y="478" width="4" height="4" fill="#fde3c8" stroke="#f3922e" stroke-width="1.500"/><rect x="25.900" y="478" width="4" height="4" fill="#fde3c8" stroke="#f3922e" stroke-width="1.500"/><rect x="32.600" y="478" width="4" height="4" fill="#fde3c8" stroke="#f3922e" stroke-width="1.500"/></svg>
<div class="tbl t2" style="left:49px;top:638.4px;width:1633.5px;height:369px">
<div class="a" style="left:0;top:0;width:1640px;height:20.18px;background:#fff;border-bottom:1px solid #c6cacc"></div>
<div class="h" style="left:150.5px;top:9.7px;transform:translateY(-50%)">BT</div>
<div class="h" style="left:194.5px;top:9.7px;transform:translateY(-50%)">Aktiv</div>
<div class="h" style="left:235.5px;top:9.7px;transform:translateY(-50%)">Bezeichnung</div>
<div class="h" style="left:375.5px;top:9.7px;transform:translateY(-50%)">Stichwort</div>
<div class="h" style="left:685.5px;top:9.7px;transform:translateY(-50%)">Menge</div>
<div class="h" style="left:768.5px;top:9.7px;transform:translateY(-50%)">Einheit</div>
<div class="h" style="left:845px;top:9.7px;transform:translateY(-50%)">EP</div>
<div class="h" style="left:976.5px;top:9.7px;transform:translateY(-50%)">%</div>
<div class="h" style="left:1076.5px;top:9.7px;transform:translateY(-50%)">Netto-GP</div>
<div class="h" style="left:1260.5px;top:9.7px;transform:translateY(-50%)">MwSt</div>
<div class="h" style="left:1428.5px;top:9.7px;transform:translateY(-50%)">Brutto-GP</div>
<div class="vl" style="left:24.0px;top:2.1px;height:17px;background:#dcdcdc"></div>
<div class="vl" style="left:40.5px;top:2.1px;height:17px;background:#dcdcdc"></div>
<div class="vl" style="left:190.0px;top:2.1px;height:17px;background:#dcdcdc"></div>
<div class="vl" style="left:231.0px;top:2.1px;height:17px;background:#dcdcdc"></div>
<div class="vl" style="left:371.0px;top:2.1px;height:17px;background:#dcdcdc"></div>
<div class="vl" style="left:681.0px;top:2.1px;height:17px;background:#dcdcdc"></div>
<div class="vl" style="left:764.0px;top:2.1px;height:17px;background:#dcdcdc"></div>
<div class="vl" style="left:840.5px;top:2.1px;height:17px;background:#dcdcdc"></div>
<div class="vl" style="left:972.0px;top:2.1px;height:17px;background:#dcdcdc"></div>
<div class="vl" style="left:1072.0px;top:2.1px;height:17px;background:#dcdcdc"></div>
<div class="vl" style="left:1256.0px;top:2.1px;height:17px;background:#dcdcdc"></div>
<div class="vl" style="left:1424.0px;top:2.1px;height:17px;background:#dcdcdc"></div>
<div class="vl" style="left:1610.5px;top:2.1px;height:17px;background:#dcdcdc"></div>
<div class="a" style="left:183.5px;top:17.6px;width:6px;height:2px;background:#a8a8a8"></div>
<div class="a" style="left:364.5px;top:17.6px;width:6px;height:2px;background:#a8a8a8"></div>
<div class="a" style="left:674.5px;top:17.6px;width:6px;height:2px;background:#a8a8a8"></div>
<div class="a" style="left:757.5px;top:17.6px;width:6px;height:2px;background:#a8a8a8"></div>
<div class="a" style="left:834px;top:17.6px;width:6px;height:2px;background:#a8a8a8"></div>
<div class="a" style="left:1065.5px;top:17.6px;width:6px;height:2px;background:#a8a8a8"></div>
<svg class="a" style="left:7px;top:5.6px" width="10" height="10" viewBox="0 0 10 10" fill="none"><path d="M8.5 1.5v7h-7z" fill="#f3f3f3" stroke="#cfcfcf" stroke-width="1"/></svg>
<svg class="a" style="left:28.3px;top:4.9px" width="9" height="11" viewBox="0 0 9 11" fill="none"><path d="M1.5 1h6v9l-3-2.4-3 2.4z" stroke="#777" stroke-width="0.9"/></svg>
<div class="c" style="left:-0.5px;top:20.18px;width:25.0px;height:24.67px;background:#fff;color:#7a7a7a"></div>
<div class="c" style="left:24.5px;top:20.18px;width:16.5px;height:24.67px;background:#f8ba8c;"></div>
<div class="c" style="left:41px;top:20.18px;width:43.5px;height:24.67px;background:#fff;"></div>
<div class="c" style="left:84.5px;top:20.18px;width:62.0px;height:24.67px;background:#f2be82;"></div>
<svg class="a" style="left:44px;top:28.52px" width="10" height="8" viewBox="0 0 10 8" fill="none"><path d="M1.5 2l3.5 3.6L8.5 2" stroke="#444" stroke-width="1.1"/></svg>
<div class="cb" style="left:55.5px;top:27.02px"></div>
<svg class="a" style="left:67.5px;top:23.52px" width="17" height="18" viewBox="0 0 17 18" fill="none"><rect x="1.500" y="1.300" width="13" height="16.200" fill="#ececec" stroke="#565656" stroke-width="1.100"/><path d="M11.600 4.900c-3-1.900-6.300-.300-6.300 2.900s3.300 4.700 6.300 2.800M4.200 6.700h5M4.200 8.700h4.500" stroke="#565656" stroke-width="1"/><path d="M4.300 13.200c2.600 2.800 8 2.500 11-1.700M15.500 11.300l-2.900.400M15.500 11.300l.300 2.900" stroke="#565656" stroke-width="1"/></svg>
<svg class="a" style="left:132.5px;top:27.52px" width="4" height="10" viewBox="0 0 4 10"><circle cx="2" cy="1.5" r="0.9" fill="#5a4a2a"/><circle cx="2" cy="5" r="0.9" fill="#5a4a2a"/><circle cx="2" cy="8.5" r="0.9" fill="#5a4a2a"/></svg>
<div class="c " style="left:146.5px;top:20.18px;width:44.0px;height:24.67px;background:#f2be82;color:#8a5a30;"><span style="left:6px">*</span></div>
<div class="c" style="left:190.5px;top:20.18px;width:41.0px;height:24.67px;background:#f2be82;"></div>
<div class="c" style="left:231.5px;top:20.18px;width:140.0px;height:24.67px;background:#f2be82;"></div>
<div class="c " style="left:371.5px;top:20.18px;width:310.0px;height:24.67px;background:#f2be82;"><span style="left:5px">DIN276</span></div>
<div class="c" style="left:681.5px;top:20.18px;width:83.0px;height:24.67px;background:#f2be82;"></div>
<div class="c" style="left:764.5px;top:20.18px;width:76.5px;height:24.67px;background:#f2be82;"></div>
<div class="c" style="left:841px;top:20.18px;width:131.5px;height:24.67px;background:#f2be82;"></div>
<div class="c" style="left:972.5px;top:20.18px;width:100.0px;height:24.67px;background:#f2be82;"></div>
<div class="c n" style="left:1072.5px;top:20.18px;width:184.0px;height:24.67px;background:#f2be82;"><span style="right:4.3px">9.345.492,28</span></div>
<div class="c n" style="left:1256.5px;top:20.18px;width:168.0px;height:24.67px;background:#f2be82;"><span style="right:4.3px">1.775.643,54</span></div>
<div class="c n" style="left:1424.5px;top:20.18px;width:186.5px;height:24.67px;background:#f2be82;"><span style="right:4.2px">11.121.135,82</span></div>
<div class="c " style="left:-0.5px;top:44.85px;width:25.0px;height:24.67px;background:#fff;color:#7a7a7a"><span style="left:6px">S</span></div>
<div class="c" style="left:24.5px;top:44.85px;width:16.5px;height:24.67px;background:#fff;"></div>
<div class="c" style="left:41px;top:44.85px;width:58.5px;height:24.67px;background:#fff;"></div>
<div class="c" style="left:99.5px;top:44.85px;width:47.0px;height:24.67px;background:#f0f0f0;"></div>
<svg class="a" style="left:58px;top:53.19px" width="10" height="8" viewBox="0 0 10 8" fill="none"><path d="M1.5 2l3.5 3.6L8.5 2" stroke="#555" stroke-width="1.1"/></svg>
<svg class="a" style="left:82.5px;top:50.19px" width="17" height="14" viewBox="0 0 17 14" fill="none"><rect x="1" y="1.500" width="9.500" height="4" stroke="#5a5a5a" stroke-width="1.100"/><rect x="5.500" y="8.500" width="10" height="4" stroke="#5a5a5a" stroke-width="1.100"/></svg>
<div class="c" style="left:146.5px;top:44.85px;width:44.0px;height:24.67px;background:#f0f0f0;"></div>
<div class="c" style="left:190.5px;top:44.85px;width:41.0px;height:24.67px;background:#fff;"></div>
<div class="cb" style="left:205px;top:51.19px"></div>
<div class="c n" style="left:231.5px;top:44.85px;width:140.0px;height:24.67px;background:#fff;"><span style="left:5px">300</span></div>
<div class="c " style="left:371.5px;top:44.85px;width:310.0px;height:24.67px;background:#fff;"><span style="left:5px">Bauwerk - Baukonstruktionen</span></div>
<div class="c" style="left:681.5px;top:44.85px;width:83.0px;height:24.67px;background:#f0f0f0;"></div>
<div class="c " style="left:764.5px;top:44.85px;width:76.5px;height:24.67px;background:#fff;"><span style="left:5.5px">BGF</span></div>
<div class="c" style="left:841px;top:44.85px;width:131.5px;height:24.67px;background:#f0f0f0;"></div>
<div class="c n" style="left:972.5px;top:44.85px;width:100.0px;height:24.67px;background:#f0f0f0;"><span style="right:4.5px">100</span></div>
<div class="c n" style="left:1072.5px;top:44.85px;width:184.0px;height:24.67px;background:#f0f0f0;"><span style="right:4.3px">8.268.551,90</span></div>
<div class="c n" style="left:1256.5px;top:44.85px;width:168.0px;height:24.67px;background:#f0f0f0;"><span style="right:4.3px">1.571.024,87</span></div>
<div class="c n" style="left:1424.5px;top:44.85px;width:186.5px;height:24.67px;background:#f0f0f0;"><span style="right:4.2px">9.839.576,77</span></div>
<div class="c " style="left:-0.5px;top:69.52px;width:25.0px;height:24.67px;background:#fff;color:#7a7a7a"><span style="left:6px">S</span></div>
<div class="c" style="left:24.5px;top:69.52px;width:16.5px;height:24.67px;background:#fff;"></div>
<div class="c" style="left:41px;top:69.52px;width:73px;height:24.67px;background:#fff;"></div>
<div class="c" style="left:114px;top:69.52px;width:32.5px;height:24.67px;background:#f0f0f0;"></div>
<svg class="a" style="left:72.5px;top:77.86px" width="10" height="8" viewBox="0 0 10 8" fill="none"><path d="M1.5 2l3.5 3.6L8.5 2" stroke="#555" stroke-width="1.1"/></svg>
<svg class="a" style="left:97px;top:74.86px" width="17" height="14" viewBox="0 0 17 14" fill="none"><rect x="1" y="1.500" width="9.500" height="4" stroke="#5a5a5a" stroke-width="1.100"/><rect x="5.500" y="8.500" width="10" height="4" stroke="#5a5a5a" stroke-width="1.100"/></svg>
<div class="c" style="left:146.5px;top:69.52px;width:44.0px;height:24.67px;background:#f0f0f0;"></div>
<div class="c" style="left:190.5px;top:69.52px;width:41.0px;height:24.67px;background:#fff;"></div>
<div class="cb" style="left:205px;top:75.86px"></div>
<div class="c n" style="left:231.5px;top:69.52px;width:140.0px;height:24.67px;background:#fff;"><span style="left:5px">330</span></div>
<div class="c " style="left:371.5px;top:69.52px;width:310.0px;height:24.67px;background:#fff;"><span style="left:5px">Außenwände / Vertikale Baukonstruktionen, außen</span></div>
<div class="c" style="left:681.5px;top:69.52px;width:83.0px;height:24.67px;background:#fff;"></div>
<div class="c " style="left:764.5px;top:69.52px;width:76.5px;height:24.67px;background:#fff;"><span style="left:5.5px">psch</span></div>
<div class="c" style="left:841px;top:69.52px;width:131.5px;height:24.67px;background:#f0f0f0;"></div>
<div class="c n" style="left:972.5px;top:69.52px;width:100.0px;height:24.67px;background:#f0f0f0;"><span style="right:4.5px">38,293</span></div>
<div class="c n" style="left:1072.5px;top:69.52px;width:184.0px;height:24.67px;background:#f0f0f0;"><span style="right:4.3px">3.166.312,30</span></div>
<div class="c n" style="left:1256.5px;top:69.52px;width:168.0px;height:24.67px;background:#f0f0f0;"><span style="right:4.3px">601.599,34</span></div>
<div class="c n" style="left:1424.5px;top:69.52px;width:186.5px;height:24.67px;background:#f0f0f0;"><span style="right:4.2px">3.767.911,64</span></div>
<div class="c " style="left:-0.5px;top:94.19px;width:25.0px;height:24.67px;background:#fff;color:#7a7a7a"><span style="left:6px">E</span></div>
<div class="c" style="left:24.5px;top:94.19px;width:16.5px;height:24.67px;background:#fff;"></div>
<div class="c" style="left:41px;top:94.19px;width:87.5px;height:24.67px;background:#fff;"></div>
<div class="c" style="left:128.5px;top:94.19px;width:18.0px;height:24.67px;background:#f0f0f0;"></div>
<svg class="a" style="left:111.5px;top:100.53px" width="17" height="12" viewBox="0 0 17 12" fill="none"><path d="M1 1h11l4 5-4 5H1z" fill="#fff" stroke="#5a5a5a" stroke-width="1.100" stroke-linejoin="round"/><path d="M4 6l2.300 2.500 4.500-4.800" stroke="#666" stroke-width="1"/></svg>
<div class="c sb" style="left:146.5px;top:94.19px;width:44.0px;height:24.67px;background:#ebf0dd;"><span style="left:6px">*</span></div>
<div class="c" style="left:190.5px;top:94.19px;width:41.0px;height:24.67px;background:#ebf0dd;"></div>
<div class="cb" style="left:205px;top:100.53px"></div>
<svg class="a" style="left:206.5px;top:102.53px" width="9" height="8" viewBox="0 0 9 8" fill="none"><path d="M1.2 4.2l2.2 2.3L7.8 1.2" stroke="#666" stroke-width="1"/></svg>
<div class="c sb nb" style="left:231.5px;top:94.19px;width:140.0px;height:24.67px;background:#ebf0dd;"><span style="left:5px">333</span></div>
<div class="c sb" style="left:371.5px;top:94.19px;width:310.0px;height:24.67px;background:#ebf0dd;"><span style="left:5px">Außenstützen</span></div>
<div class="c sb" style="left:681.5px;top:94.19px;width:83.0px;height:24.67px;background:#ebf0dd;"><span style="left:5.5px">1</span></div>
<div class="c sb" style="left:764.5px;top:94.19px;width:76.5px;height:24.67px;background:#ebf0dd;"><span style="left:5.5px">psch</span></div>
<div class="c sb nb" style="left:841px;top:94.19px;width:131.5px;height:24.67px;background:#ebf0dd;"><span style="right:4.5px">3.166.312,30</span></div>
<div class="c sb nb" style="left:972.5px;top:94.19px;width:100.0px;height:24.67px;background:#ebf0dd;"><span style="right:4.5px">38,293</span></div>
<div class="c sb nb" style="left:1072.5px;top:94.19px;width:184.0px;height:24.67px;background:#ebf0dd;"><span style="right:4.3px">3.166.312,30</span></div>
<div class="c sb nb" style="left:1256.5px;top:94.19px;width:168.0px;height:24.67px;background:#ebf0dd;"><span style="right:4.3px">601.599,34</span></div>
<div class="c sb nb" style="left:1424.5px;top:94.19px;width:186.5px;height:24.67px;background:#ebf0dd;"><span style="right:4.2px">3.767.911,64</span></div>
<div class="c " style="left:-0.5px;top:118.86px;width:25.0px;height:24.67px;background:#fff;color:#7a7a7a"><span style="left:6px">S</span></div>
<div class="c" style="left:24.5px;top:118.86px;width:16.5px;height:24.67px;background:#fff;"></div>
<div class="c" style="left:41px;top:118.86px;width:73px;height:24.67px;background:#fff;"></div>
<div class="c" style="left:114px;top:118.86px;width:32.5px;height:24.67px;background:#f0f0f0;"></div>
<svg class="a" style="left:72.5px;top:127.2px" width="10" height="8" viewBox="0 0 10 8" fill="none"><path d="M1.5 2l3.5 3.6L8.5 2" stroke="#555" stroke-width="1.1"/></svg>
<svg class="a" style="left:97px;top:124.2px" width="17" height="14" viewBox="0 0 17 14" fill="none"><rect x="1" y="1.500" width="9.500" height="4" stroke="#5a5a5a" stroke-width="1.100"/><rect x="5.500" y="8.500" width="10" height="4" stroke="#5a5a5a" stroke-width="1.100"/></svg>
<div class="c" style="left:146.5px;top:118.86px;width:44.0px;height:24.67px;background:#f0f0f0;"></div>
<div class="c" style="left:190.5px;top:118.86px;width:41.0px;height:24.67px;background:#fff;"></div>
<div class="cb" style="left:205px;top:125.2px"></div>
<div class="c n" style="left:231.5px;top:118.86px;width:140.0px;height:24.67px;background:#fff;"><span style="left:5px">350</span></div>
<div class="c " style="left:371.5px;top:118.86px;width:310.0px;height:24.67px;background:#fff;"><span style="left:5px">Decken / Horizontale Baukonstruktionen</span></div>
<div class="c" style="left:681.5px;top:118.86px;width:83.0px;height:24.67px;background:#fff;"></div>
<div class="c " style="left:764.5px;top:118.86px;width:76.5px;height:24.67px;background:#fff;"><span style="left:5.5px">psch</span></div>
<div class="c" style="left:841px;top:118.86px;width:131.5px;height:24.67px;background:#f0f0f0;"></div>
<div class="c n" style="left:972.5px;top:118.86px;width:100.0px;height:24.67px;background:#f0f0f0;"><span style="right:4.5px">14,678</span></div>
<div class="c n" style="left:1072.5px;top:118.86px;width:184.0px;height:24.67px;background:#f0f0f0;"><span style="right:4.3px">1.213.687,90</span></div>
<div class="c n" style="left:1256.5px;top:118.86px;width:168.0px;height:24.67px;background:#f0f0f0;"><span style="right:4.3px">230.600,70</span></div>
<div class="c n" style="left:1424.5px;top:118.86px;width:186.5px;height:24.67px;background:#f0f0f0;"><span style="right:4.2px">1.444.288,60</span></div>
<div class="c " style="left:-0.5px;top:143.53px;width:25.0px;height:24.67px;background:#fff;color:#7a7a7a"><span style="left:6px">E</span></div>
<div class="c" style="left:24.5px;top:143.53px;width:16.5px;height:24.67px;background:#fff;"></div>
<div class="c" style="left:41px;top:143.53px;width:87.5px;height:24.67px;background:#fff;"></div>
<div class="c" style="left:128.5px;top:143.53px;width:18.0px;height:24.67px;background:#f0f0f0;"></div>
<svg class="a" style="left:111.5px;top:149.87px" width="17" height="12" viewBox="0 0 17 12" fill="none"><path d="M1 1h11l4 5-4 5H1z" fill="#fff" stroke="#5a5a5a" stroke-width="1.100" stroke-linejoin="round"/><path d="M4 6l2.300 2.500 4.500-4.800" stroke="#666" stroke-width="1"/></svg>
<div class="c sb" style="left:146.5px;top:143.53px;width:44.0px;height:24.67px;background:#ebf0dd;"><span style="left:6px">*</span></div>
<div class="c" style="left:190.5px;top:143.53px;width:41.0px;height:24.67px;background:#ebf0dd;"></div>
<div class="cb" style="left:205px;top:149.87px"></div>
<svg class="a" style="left:206.5px;top:151.87px" width="9" height="8" viewBox="0 0 9 8" fill="none"><path d="M1.2 4.2l2.2 2.3L7.8 1.2" stroke="#666" stroke-width="1"/></svg>
<div class="c sb nb" style="left:231.5px;top:143.53px;width:140.0px;height:24.67px;background:#ebf0dd;"><span style="left:5px">351</span></div>
<div class="c sb" style="left:371.5px;top:143.53px;width:310.0px;height:24.67px;background:#ebf0dd;"><span style="left:5px">Deckenkonstruktionen</span></div>
<div class="c sb" style="left:681.5px;top:143.53px;width:83.0px;height:24.67px;background:#ebf0dd;"><span style="left:5.5px">1</span></div>
<div class="c sb" style="left:764.5px;top:143.53px;width:76.5px;height:24.67px;background:#ebf0dd;"><span style="left:5.5px">psch</span></div>
<div class="c sb nb" style="left:841px;top:143.53px;width:131.5px;height:24.67px;background:#ebf0dd;"><span style="right:4.5px">1.213.687,90</span></div>
<div class="c sb nb" style="left:972.5px;top:143.53px;width:100.0px;height:24.67px;background:#ebf0dd;"><span style="right:4.5px">14,678</span></div>
<div class="c sb nb" style="left:1072.5px;top:143.53px;width:184.0px;height:24.67px;background:#ebf0dd;"><span style="right:4.3px">1.213.687,90</span></div>
<div class="c sb nb" style="left:1256.5px;top:143.53px;width:168.0px;height:24.67px;background:#ebf0dd;"><span style="right:4.3px">230.600,70</span></div>
<div class="c sb nb" style="left:1424.5px;top:143.53px;width:186.5px;height:24.67px;background:#ebf0dd;"><span style="right:4.2px">1.444.288,60</span></div>
<div class="c " style="left:-0.5px;top:168.2px;width:25.0px;height:24.67px;background:#fff;color:#7a7a7a"><span style="left:6px">S</span></div>
<div class="c" style="left:24.5px;top:168.2px;width:16.5px;height:24.67px;background:#fff;"></div>
<div class="c" style="left:41px;top:168.2px;width:73px;height:24.67px;background:#fff;"></div>
<div class="c" style="left:114px;top:168.2px;width:32.5px;height:24.67px;background:#f0f0f0;"></div>
<svg class="a" style="left:72.5px;top:176.54px" width="10" height="8" viewBox="0 0 10 8" fill="none"><path d="M1.5 2l3.5 3.6L8.5 2" stroke="#555" stroke-width="1.1"/></svg>
<svg class="a" style="left:97px;top:173.54px" width="17" height="14" viewBox="0 0 17 14" fill="none"><rect x="1" y="1.500" width="9.500" height="4" stroke="#5a5a5a" stroke-width="1.100"/><rect x="5.500" y="8.500" width="10" height="4" stroke="#5a5a5a" stroke-width="1.100"/></svg>
<div class="c" style="left:146.5px;top:168.2px;width:44.0px;height:24.67px;background:#f0f0f0;"></div>
<div class="c" style="left:190.5px;top:168.2px;width:41.0px;height:24.67px;background:#fff;"></div>
<div class="cb" style="left:205px;top:174.54px"></div>
<div class="c n" style="left:231.5px;top:168.2px;width:140.0px;height:24.67px;background:#fff;"><span style="left:5px">380</span></div>
<div class="c " style="left:371.5px;top:168.2px;width:310.0px;height:24.67px;background:#fff;"><span style="left:5px">Baukonstruktive Einbauten</span></div>
<div class="c" style="left:681.5px;top:168.2px;width:83.0px;height:24.67px;background:#fff;"></div>
<div class="c " style="left:764.5px;top:168.2px;width:76.5px;height:24.67px;background:#fff;"><span style="left:5.5px">psch</span></div>
<div class="c" style="left:841px;top:168.2px;width:131.5px;height:24.67px;background:#f0f0f0;"></div>
<div class="c n" style="left:972.5px;top:168.2px;width:100.0px;height:24.67px;background:#f0f0f0;"><span style="right:4.5px">47,028</span></div>
<div class="c n" style="left:1072.5px;top:168.2px;width:184.0px;height:24.67px;background:#f0f0f0;"><span style="right:4.3px">3.888.551,70</span></div>
<div class="c n" style="left:1256.5px;top:168.2px;width:168.0px;height:24.67px;background:#f0f0f0;"><span style="right:4.3px">738.824,83</span></div>
<div class="c n" style="left:1424.5px;top:168.2px;width:186.5px;height:24.67px;background:#f0f0f0;"><span style="right:4.2px">4.627.376,53</span></div>
<div class="c " style="left:-0.5px;top:192.87px;width:25.0px;height:24.67px;background:#fff;color:#7a7a7a"><span style="left:6px">E</span></div>
<div class="c" style="left:24.5px;top:192.87px;width:16.5px;height:24.67px;background:#fff;"></div>
<div class="c" style="left:41px;top:192.87px;width:87.5px;height:24.67px;background:#fff;"></div>
<div class="c" style="left:128.5px;top:192.87px;width:18.0px;height:24.67px;background:#f0f0f0;"></div>
<div class="cb" style="left:100px;top:199.71px"></div>
<svg class="a" style="left:111.5px;top:199.21px" width="17" height="12" viewBox="0 0 17 12" fill="none"><path d="M1 1h11l4 5-4 5H1z" fill="#fff" stroke="#5a5a5a" stroke-width="1.100" stroke-linejoin="round"/><path d="M4 6l2.300 2.500 4.500-4.800" stroke="#666" stroke-width="1"/></svg>
<div class="c sb" style="left:146.5px;top:192.87px;width:44.0px;height:24.67px;background:#ebf0dd;"><span style="left:6px">*</span></div>
<div class="c" style="left:190.5px;top:192.87px;width:41.0px;height:24.67px;background:#ebf0dd;"></div>
<div class="cb" style="left:205px;top:199.21px"></div>
<svg class="a" style="left:206.5px;top:201.21px" width="9" height="8" viewBox="0 0 9 8" fill="none"><path d="M1.2 4.2l2.2 2.3L7.8 1.2" stroke="#666" stroke-width="1"/></svg>
<div class="c sb nb" style="left:231.5px;top:192.87px;width:140.0px;height:24.67px;background:#ebf0dd;"><span style="left:5px">382</span></div>
<div class="c sb" style="left:371.5px;top:192.87px;width:310.0px;height:24.67px;background:#ebf0dd;"><span style="left:5px">Besondere Einbauten</span></div>
<div class="c sb" style="left:681.5px;top:192.87px;width:83.0px;height:24.67px;background:#ebf0dd;"><span style="left:5.5px">1</span></div>
<div class="c sb" style="left:764.5px;top:192.87px;width:76.5px;height:24.67px;background:#ebf0dd;"><span style="left:5.5px">psch</span></div>
<div class="c sb nb" style="left:841px;top:192.87px;width:131.5px;height:24.67px;background:#ebf0dd;"><span style="right:4.5px">1.302.801,40</span></div>
<div class="c sb nb" style="left:972.5px;top:192.87px;width:100.0px;height:24.67px;background:#ebf0dd;"><span style="right:4.5px">15,756</span></div>
<div class="c sb nb" style="left:1072.5px;top:192.87px;width:184.0px;height:24.67px;background:#ebf0dd;"><span style="right:4.3px">1.302.801,40</span></div>
<div class="c sb nb" style="left:1256.5px;top:192.87px;width:168.0px;height:24.67px;background:#ebf0dd;"><span style="right:4.3px">247.532,27</span></div>
<div class="c sb nb" style="left:1424.5px;top:192.87px;width:186.5px;height:24.67px;background:#ebf0dd;"><span style="right:4.2px">1.550.333,67</span></div>
<div class="c " style="left:-0.5px;top:217.54px;width:25.0px;height:24.67px;background:#fff;color:#7a7a7a"><span style="left:6px">E</span></div>
<div class="c" style="left:24.5px;top:217.54px;width:16.5px;height:24.67px;background:#fff;"></div>
<div class="c" style="left:41px;top:217.54px;width:87.5px;height:24.67px;background:#fff;"></div>
<div class="c" style="left:128.5px;top:217.54px;width:18.0px;height:24.67px;background:#f0f0f0;"></div>
<svg class="a" style="left:111.5px;top:223.88px" width="17" height="12" viewBox="0 0 17 12" fill="none"><path d="M1 1h11l4 5-4 5H1z" fill="#fff" stroke="#5a5a5a" stroke-width="1.100" stroke-linejoin="round"/><path d="M4 6l2.300 2.500 4.500-4.800" stroke="#666" stroke-width="1"/></svg>
<div class="c sb" style="left:146.5px;top:217.54px;width:44.0px;height:24.67px;background:#ebf0dd;"><span style="left:6px">*</span></div>
<div class="c" style="left:190.5px;top:217.54px;width:41.0px;height:24.67px;background:#ebf0dd;"></div>
<div class="cb" style="left:205px;top:223.88px"></div>
<svg class="a" style="left:206.5px;top:225.88px" width="9" height="8" viewBox="0 0 9 8" fill="none"><path d="M1.2 4.2l2.2 2.3L7.8 1.2" stroke="#666" stroke-width="1"/></svg>
<div class="c sb nb" style="left:231.5px;top:217.54px;width:140.0px;height:24.67px;background:#ebf0dd;"><span style="left:5px">389</span></div>
<div class="c sb" style="left:371.5px;top:217.54px;width:310.0px;height:24.67px;background:#ebf0dd;"><span style="left:5px">Sonstiges zur KG 380</span></div>
<div class="c sb" style="left:681.5px;top:217.54px;width:83.0px;height:24.67px;background:#ebf0dd;"><span style="left:5.5px">1</span></div>
<div class="c sb" style="left:764.5px;top:217.54px;width:76.5px;height:24.67px;background:#ebf0dd;"><span style="left:5.5px">psch</span></div>
<div class="c sb nb" style="left:841px;top:217.54px;width:131.5px;height:24.67px;background:#ebf0dd;"><span style="right:4.5px">2.585.750,30</span></div>
<div class="c sb nb" style="left:972.5px;top:217.54px;width:100.0px;height:24.67px;background:#ebf0dd;"><span style="right:4.5px">31,272</span></div>
<div class="c sb nb" style="left:1072.5px;top:217.54px;width:184.0px;height:24.67px;background:#ebf0dd;"><span style="right:4.3px">2.585.750,30</span></div>
<div class="c sb nb" style="left:1256.5px;top:217.54px;width:168.0px;height:24.67px;background:#ebf0dd;"><span style="right:4.3px">491.292,56</span></div>
<div class="c sb nb" style="left:1424.5px;top:217.54px;width:186.5px;height:24.67px;background:#ebf0dd;"><span style="right:4.2px">3.077.042,86</span></div>
<div class="c " style="left:-0.5px;top:242.21px;width:25.0px;height:24.67px;background:#fff;color:#7a7a7a"><span style="left:6px">S</span></div>
<div class="c" style="left:24.5px;top:242.21px;width:16.5px;height:24.67px;background:#fff;"></div>
<div class="c" style="left:41px;top:242.21px;width:58.5px;height:24.67px;background:#fff;"></div>
<div class="c" style="left:99.5px;top:242.21px;width:47.0px;height:24.67px;background:#f0f0f0;"></div>
<svg class="a" style="left:58px;top:250.55px" width="10" height="8" viewBox="0 0 10 8" fill="none"><path d="M1.5 2l3.5 3.6L8.5 2" stroke="#555" stroke-width="1.1"/></svg>
<svg class="a" style="left:82.5px;top:247.55px" width="17" height="14" viewBox="0 0 17 14" fill="none"><rect x="1" y="1.500" width="9.500" height="4" stroke="#5a5a5a" stroke-width="1.100"/><rect x="5.500" y="8.500" width="10" height="4" stroke="#5a5a5a" stroke-width="1.100"/></svg>
<div class="c" style="left:146.5px;top:242.21px;width:44.0px;height:24.67px;background:#f0f0f0;"></div>
<div class="c" style="left:190.5px;top:242.21px;width:41.0px;height:24.67px;background:#fff;"></div>
<div class="cb" style="left:205px;top:248.55px"></div>
<div class="c n" style="left:231.5px;top:242.21px;width:140.0px;height:24.67px;background:#fff;"><span style="left:5px">500</span></div>
<div class="c " style="left:371.5px;top:242.21px;width:310.0px;height:24.67px;background:#fff;"><span style="left:5px">Außenanlagen und Freiflächen</span></div>
<div class="c" style="left:681.5px;top:242.21px;width:83.0px;height:24.67px;background:#f0f0f0;"></div>
<div class="c " style="left:764.5px;top:242.21px;width:76.5px;height:24.67px;background:#fff;"><span style="left:5.5px">AUF</span></div>
<div class="c" style="left:841px;top:242.21px;width:131.5px;height:24.67px;background:#f0f0f0;"></div>
<div class="c n" style="left:972.5px;top:242.21px;width:100.0px;height:24.67px;background:#f0f0f0;"><span style="right:4.5px">13,025</span></div>
<div class="c n" style="left:1072.5px;top:242.21px;width:184.0px;height:24.67px;background:#f0f0f0;"><span style="right:4.3px">1.076.940,38</span></div>
<div class="c n" style="left:1256.5px;top:242.21px;width:168.0px;height:24.67px;background:#f0f0f0;"><span style="right:4.3px">204.618,67</span></div>
<div class="c n" style="left:1424.5px;top:242.21px;width:186.5px;height:24.67px;background:#f0f0f0;"><span style="right:4.2px">1.281.559,05</span></div>
<div class="c " style="left:-0.5px;top:266.88px;width:25.0px;height:24.67px;background:#fff;color:#7a7a7a"><span style="left:6px">S</span></div>
<div class="c" style="left:24.5px;top:266.88px;width:16.5px;height:24.67px;background:#fff;"></div>
<div class="c" style="left:41px;top:266.88px;width:73px;height:24.67px;background:#fff;"></div>
<div class="c" style="left:114px;top:266.88px;width:32.5px;height:24.67px;background:#f0f0f0;"></div>
<svg class="a" style="left:72.5px;top:275.22px" width="10" height="8" viewBox="0 0 10 8" fill="none"><path d="M1.5 2l3.5 3.6L8.5 2" stroke="#555" stroke-width="1.1"/></svg>
<svg class="a" style="left:97px;top:272.22px" width="17" height="14" viewBox="0 0 17 14" fill="none"><rect x="1" y="1.500" width="9.500" height="4" stroke="#5a5a5a" stroke-width="1.100"/><rect x="5.500" y="8.500" width="10" height="4" stroke="#5a5a5a" stroke-width="1.100"/></svg>
<div class="c" style="left:146.5px;top:266.88px;width:44.0px;height:24.67px;background:#f0f0f0;"></div>
<div class="c" style="left:190.5px;top:266.88px;width:41.0px;height:24.67px;background:#fff;"></div>
<div class="cb" style="left:205px;top:273.22px"></div>
<div class="c n" style="left:231.5px;top:266.88px;width:140.0px;height:24.67px;background:#fff;"><span style="left:5px">530</span></div>
<div class="c " style="left:371.5px;top:266.88px;width:310.0px;height:24.67px;background:#fff;"><span style="left:5px">Oberbau, Deckschichten</span></div>
<div class="c" style="left:681.5px;top:266.88px;width:83.0px;height:24.67px;background:#fff;"></div>
<div class="c " style="left:764.5px;top:266.88px;width:76.5px;height:24.67px;background:#fff;"><span style="left:5.5px">psch</span></div>
<div class="c" style="left:841px;top:266.88px;width:131.5px;height:24.67px;background:#f0f0f0;"></div>
<div class="c n" style="left:972.5px;top:266.88px;width:100.0px;height:24.67px;background:#f0f0f0;"><span style="right:4.5px">11,422</span></div>
<div class="c n" style="left:1072.5px;top:266.88px;width:184.0px;height:24.67px;background:#f0f0f0;"><span style="right:4.3px">944.440,38</span></div>
<div class="c n" style="left:1256.5px;top:266.88px;width:168.0px;height:24.67px;background:#f0f0f0;"><span style="right:4.3px">179.443,67</span></div>
<div class="c n" style="left:1424.5px;top:266.88px;width:186.5px;height:24.67px;background:#f0f0f0;"><span style="right:4.2px">1.123.884,05</span></div>
<div class="c " style="left:-0.5px;top:291.55px;width:25.0px;height:24.67px;background:#fff;color:#7a7a7a"><span style="left:6px">E</span></div>
<div class="c" style="left:24.5px;top:291.55px;width:16.5px;height:24.67px;background:#fff;"></div>
<div class="c" style="left:41px;top:291.55px;width:87.5px;height:24.67px;background:#fff;"></div>
<div class="c" style="left:128.5px;top:291.55px;width:18.0px;height:24.67px;background:#f0f0f0;"></div>
<svg class="a" style="left:111.5px;top:297.89px" width="17" height="12" viewBox="0 0 17 12" fill="none"><path d="M1 1h11l4 5-4 5H1z" fill="#fff" stroke="#5a5a5a" stroke-width="1.100" stroke-linejoin="round"/><path d="M4 6l2.300 2.500 4.500-4.800" stroke="#666" stroke-width="1"/></svg>
<div class="c sb" style="left:146.5px;top:291.55px;width:44.0px;height:24.67px;background:#ebf0dd;"><span style="left:6px">*</span></div>
<div class="c" style="left:190.5px;top:291.55px;width:41.0px;height:24.67px;background:#ebf0dd;"></div>
<div class="cb" style="left:205px;top:297.89px"></div>
<svg class="a" style="left:206.5px;top:299.89px" width="9" height="8" viewBox="0 0 9 8" fill="none"><path d="M1.2 4.2l2.2 2.3L7.8 1.2" stroke="#666" stroke-width="1"/></svg>
<div class="c sb nb" style="left:231.5px;top:291.55px;width:140.0px;height:24.67px;background:#ebf0dd;"><span style="left:5px">531</span></div>
<div class="c sb" style="left:371.5px;top:291.55px;width:310.0px;height:24.67px;background:#ebf0dd;"><span style="left:5px">Wege</span></div>
<div class="c sb" style="left:681.5px;top:291.55px;width:83.0px;height:24.67px;background:#ebf0dd;"><span style="left:5.5px">1</span></div>
<div class="c sb" style="left:764.5px;top:291.55px;width:76.5px;height:24.67px;background:#ebf0dd;"><span style="left:5.5px">psch</span></div>
<div class="c sb nb" style="left:841px;top:291.55px;width:131.5px;height:24.67px;background:#ebf0dd;"><span style="right:4.5px">445.704,00</span></div>
<div class="c sb nb" style="left:972.5px;top:291.55px;width:100.0px;height:24.67px;background:#ebf0dd;"><span style="right:4.5px">5,39</span></div>
<div class="c sb nb" style="left:1072.5px;top:291.55px;width:184.0px;height:24.67px;background:#ebf0dd;"><span style="right:4.3px">445.704,00</span></div>
<div class="c sb nb" style="left:1256.5px;top:291.55px;width:168.0px;height:24.67px;background:#ebf0dd;"><span style="right:4.3px">84.683,76</span></div>
<div class="c sb nb" style="left:1424.5px;top:291.55px;width:186.5px;height:24.67px;background:#ebf0dd;"><span style="right:4.2px">530.387,76</span></div>
<div class="c " style="left:-0.5px;top:316.22px;width:25.0px;height:24.67px;background:#fff;color:#7a7a7a"><span style="left:6px">E</span></div>
<div class="c" style="left:24.5px;top:316.22px;width:16.5px;height:24.67px;background:#fff;"></div>
<div class="c" style="left:41px;top:316.22px;width:87.5px;height:24.67px;background:#fff;"></div>
<div class="c" style="left:128.5px;top:316.22px;width:18.0px;height:24.67px;background:#f0f0f0;"></div>
<svg class="a" style="left:111.5px;top:322.56px" width="17" height="12" viewBox="0 0 17 12" fill="none"><path d="M1 1h11l4 5-4 5H1z" fill="#fff" stroke="#5a5a5a" stroke-width="1.100" stroke-linejoin="round"/><path d="M4 6l2.300 2.500 4.500-4.800" stroke="#666" stroke-width="1"/></svg>
<div class="c sb" style="left:146.5px;top:316.22px;width:44.0px;height:24.67px;background:#ebf0dd;"><span style="left:6px">*</span></div>
<div class="c" style="left:190.5px;top:316.22px;width:41.0px;height:24.67px;background:#ebf0dd;"></div>
<div class="cb" style="left:205px;top:322.56px"></div>
<svg class="a" style="left:206.5px;top:324.56px" width="9" height="8" viewBox="0 0 9 8" fill="none"><path d="M1.2 4.2l2.2 2.3L7.8 1.2" stroke="#666" stroke-width="1"/></svg>
<div class="c sb nb" style="left:231.5px;top:316.22px;width:140.0px;height:24.67px;background:#ebf0dd;"><span style="left:5px">532</span></div>
<div class="c sb" style="left:371.5px;top:316.22px;width:310.0px;height:24.67px;background:#ebf0dd;"><span style="left:5px">Straßen</span></div>
<div class="c sb" style="left:681.5px;top:316.22px;width:83.0px;height:24.67px;background:#ebf0dd;"><span style="left:5.5px">1</span></div>
<div class="c sb" style="left:764.5px;top:316.22px;width:76.5px;height:24.67px;background:#ebf0dd;"><span style="left:5.5px">psch</span></div>
<div class="c sb nb" style="left:841px;top:316.22px;width:131.5px;height:24.67px;background:#ebf0dd;"><span style="right:4.5px">498.736,38</span></div>
<div class="c sb nb" style="left:972.5px;top:316.22px;width:100.0px;height:24.67px;background:#ebf0dd;"><span style="right:4.5px">6,032</span></div>
<div class="c sb nb" style="left:1072.5px;top:316.22px;width:184.0px;height:24.67px;background:#ebf0dd;"><span style="right:4.3px">498.736,38</span></div>
<div class="c sb nb" style="left:1256.5px;top:316.22px;width:168.0px;height:24.67px;background:#ebf0dd;"><span style="right:4.3px">94.759,91</span></div>
<div class="c sb nb" style="left:1424.5px;top:316.22px;width:186.5px;height:24.67px;background:#ebf0dd;"><span style="right:4.2px">593.496,29</span></div>
<div class="c " style="left:-0.5px;top:340.89px;width:25.0px;height:24.67px;background:#fff;color:#7a7a7a"><span style="left:6px">S</span></div>
<div class="c" style="left:24.5px;top:340.89px;width:16.5px;height:24.67px;background:#fff;"></div>
<div class="c" style="left:41px;top:340.89px;width:73px;height:24.67px;background:#fff;"></div>
<div class="c" style="left:114px;top:340.89px;width:32.5px;height:24.67px;background:#f0f0f0;"></div>
<svg class="a" style="left:72.5px;top:349.23px" width="10" height="8" viewBox="0 0 10 8" fill="none"><path d="M1.5 2l3.5 3.6L8.5 2" stroke="#555" stroke-width="1.1"/></svg>
<svg class="a" style="left:97px;top:346.23px" width="17" height="14" viewBox="0 0 17 14" fill="none"><rect x="1" y="1.500" width="9.500" height="4" stroke="#5a5a5a" stroke-width="1.100"/><rect x="5.500" y="8.500" width="10" height="4" stroke="#5a5a5a" stroke-width="1.100"/></svg>
<div class="c" style="left:146.5px;top:340.89px;width:44.0px;height:24.67px;background:#f0f0f0;"></div>
<div class="c" style="left:190.5px;top:340.89px;width:41.0px;height:24.67px;background:#fff;"></div>
<div class="cb" style="left:205px;top:347.23px"></div>
<div class="c n" style="left:231.5px;top:340.89px;width:140.0px;height:24.67px;background:#fff;"><span style="left:5px">540</span></div>
<div class="c " style="left:371.5px;top:340.89px;width:310.0px;height:24.67px;background:#fff;"><span style="left:5px">Baukonstruktionen</span></div>
<div class="c" style="left:681.5px;top:340.89px;width:83.0px;height:24.67px;background:#fff;"></div>
<div class="c " style="left:764.5px;top:340.89px;width:76.5px;height:24.67px;background:#fff;"><span style="left:5.5px">psch</span></div>
<div class="c" style="left:841px;top:340.89px;width:131.5px;height:24.67px;background:#f0f0f0;"></div>
<div class="c n" style="left:972.5px;top:340.89px;width:100.0px;height:24.67px;background:#f0f0f0;"><span style="right:4.5px">1,602</span></div>
<div class="c n" style="left:1072.5px;top:340.89px;width:184.0px;height:24.67px;background:#f0f0f0;"><span style="right:4.3px">132.500,00</span></div>
<div class="c n" style="left:1256.5px;top:340.89px;width:168.0px;height:24.67px;background:#f0f0f0;"><span style="right:4.3px">25.175,00</span></div>
<div class="c n" style="left:1424.5px;top:340.89px;width:186.5px;height:24.67px;background:#f0f0f0;"><span style="right:4.2px">157.675,00</span></div>
<div class="c" style="left:-0.5px;top:365.56px;width:25.0px;height:24.67px;background:#fff;color:#7a7a7a"></div>
<div class="c" style="left:24.5px;top:365.56px;width:16.5px;height:24.67px;background:#fff;"></div>
<div class="c" style="left:41px;top:365.56px;width:87.5px;height:24.67px;background:#fff;"></div>
<div class="c" style="left:128.5px;top:365.56px;width:18.0px;height:24.67px;background:#f0f0f0;"></div>
<div class="c" style="left:146.5px;top:365.56px;width:44.0px;height:24.67px;background:#f0f0f0;"></div>
<div class="c" style="left:190.5px;top:365.56px;width:41.0px;height:24.67px;background:#fff;"></div>
<div class="c" style="left:231.5px;top:365.56px;width:140.0px;height:24.67px;background:#fff;"></div>
<div class="c" style="left:371.5px;top:365.56px;width:310.0px;height:24.67px;background:#fff;"></div>
<div class="c" style="left:681.5px;top:365.56px;width:83.0px;height:24.67px;background:#fff;"></div>
<div class="c" style="left:764.5px;top:365.56px;width:76.5px;height:24.67px;background:#fff;"></div>
<div class="c" style="left:841px;top:365.56px;width:131.5px;height:24.67px;background:#f0f0f0;"></div>
<div class="c" style="left:972.5px;top:365.56px;width:100.0px;height:24.67px;background:#f0f0f0;"></div>
<div class="c" style="left:1072.5px;top:365.56px;width:184.0px;height:24.67px;background:#f0f0f0;"></div>
<div class="c" style="left:1256.5px;top:365.56px;width:168.0px;height:24.67px;background:#f0f0f0;"></div>
<div class="c" style="left:1424.5px;top:365.56px;width:186.5px;height:24.67px;background:#f0f0f0;"></div>
<div class="hl" style="left:24.5px;top:44.35px;width:1586.5px"></div><div class="hl" style="left:24.5px;top:69.02px;width:1586.5px"></div><div class="hl" style="left:24.5px;top:93.69px;width:1586.5px"></div><div class="hl" style="left:24.5px;top:118.36px;width:1586.5px"></div><div class="hl" style="left:24.5px;top:143.03px;width:1586.5px"></div><div class="hl" style="left:24.5px;top:167.7px;width:1586.5px"></div><div class="hl" style="left:24.5px;top:192.37px;width:1586.5px"></div><div class="hl" style="left:24.5px;top:217.04px;width:1586.5px"></div><div class="hl" style="left:24.5px;top:241.71px;width:1586.5px"></div><div class="hl" style="left:24.5px;top:266.38px;width:1586.5px"></div><div class="hl" style="left:24.5px;top:291.05px;width:1586.5px"></div><div class="hl" style="left:24.5px;top:315.72px;width:1586.5px"></div><div class="hl" style="left:24.5px;top:340.39px;width:1586.5px"></div><div class="hl" style="left:24.5px;top:365.06px;width:1586.5px"></div><div class="hl" style="left:24.5px;top:389.73px;width:1586.5px"></div>
<div class="hl" style="left:0;top:19.48px;width:1640px;background:#c6cacc"></div>
<div class="vl" style="left:24.0px;top:20.18px;height:350px;background:#dcdcdc"></div>
<div class="vl" style="left:40.5px;top:20.18px;height:350px;background:#dcdcdc"></div>
<div class="vl" style="left:190.0px;top:20.18px;height:350px;background:#dcdcdc"></div>
<div class="vl" style="left:231.0px;top:20.18px;height:350px;background:#dcdcdc"></div>
<div class="vl" style="left:371.0px;top:20.18px;height:350px;background:#dcdcdc"></div>
<div class="vl" style="left:681.0px;top:20.18px;height:350px;background:#dcdcdc"></div>
<div class="vl" style="left:764.0px;top:20.18px;height:350px;background:#dcdcdc"></div>
<div class="vl" style="left:840.5px;top:20.18px;height:350px;background:#dcdcdc"></div>
<div class="vl" style="left:972.0px;top:20.18px;height:350px;background:#dcdcdc"></div>
<div class="vl" style="left:1072.0px;top:20.18px;height:350px;background:#dcdcdc"></div>
<div class="vl" style="left:1256.0px;top:20.18px;height:350px;background:#dcdcdc"></div>
<div class="vl" style="left:1424.0px;top:20.18px;height:350px;background:#dcdcdc"></div>
<div class="vl" style="left:1610.5px;top:20.18px;height:350px;background:#dcdcdc"></div>
<div class="vl" style="left:146px;top:1.6px;height:370px;background:#8e8e8e;width:1.2px"></div>
<div class="a" style="left:1619px;top:20.6px;width:12.5px;height:347px;background:#ececec;border:1px solid #d0d0d0"></div>
<div class="a" style="left:1619px;top:20.6px;width:12.5px;height:309px;background:#fff;border:1px solid #cfcfcf"></div>
<div class="a" style="left:1619px;top:20.6px;width:12.5px;height:13.5px;background:#fff;border:1px solid #cfcfcf"></div>
<svg class="a" style="left:1622px;top:24.6px" width="7" height="5" viewBox="0 0 7 5"><path d="M0.5 4h6l-3-3.3z" fill="#8a8a8a"/></svg>
<div class="a" style="left:1619px;top:353.6px;width:12.5px;height:14px;background:#fff;border:1px solid #cfcfcf"></div>
<svg class="a" style="left:1622px;top:358.1px" width="7" height="5" viewBox="0 0 7 5"><path d="M0.5 0.8h6l-3 3.3z" fill="#8a8a8a"/></svg>
</div>
<div class="a" style="left:2px;top:1007.5px;width:1703px;height:17px;background:#f0f0f0;border-left:1px solid #d6d6d6"></div>
<div class="t sm" style="left:8.5px;top:1016.3px;transform:translateY(-50%);font-size:8.35px;color:#606060">Ges.Netto: 9.345.492,28</div>
<div class="t sm" style="left:109px;top:1016.3px;transform:translateY(-50%);font-size:8.35px;color:#606060">Ges.Brutto: 11.121.135,82</div>
<div class="a" style="left:104.5px;top:1009px;width:1px;height:15px;background:#dcdcdc;"></div>
<div class="a" style="left:105.5px;top:1009px;width:1px;height:15px;background:#fafafa;"></div>
<div class="a" style="left:213px;top:1009px;width:1px;height:15px;background:#dcdcdc;"></div>
<div class="a" style="left:214px;top:1009px;width:1px;height:15px;background:#fafafa;"></div>
<div class="a" style="left:1590px;top:1009px;width:1px;height:15px;background:#dcdcdc;"></div>
<div class="a" style="left:1591px;top:1009px;width:1px;height:15px;background:#fafafa;"></div>
<div class="t sm" style="right:6px;top:1016.3px;transform:translateY(-50%);font-size:8.6px;color:#606060">Leitwährung: EUR, LS: EUR</div>
</body></html>
